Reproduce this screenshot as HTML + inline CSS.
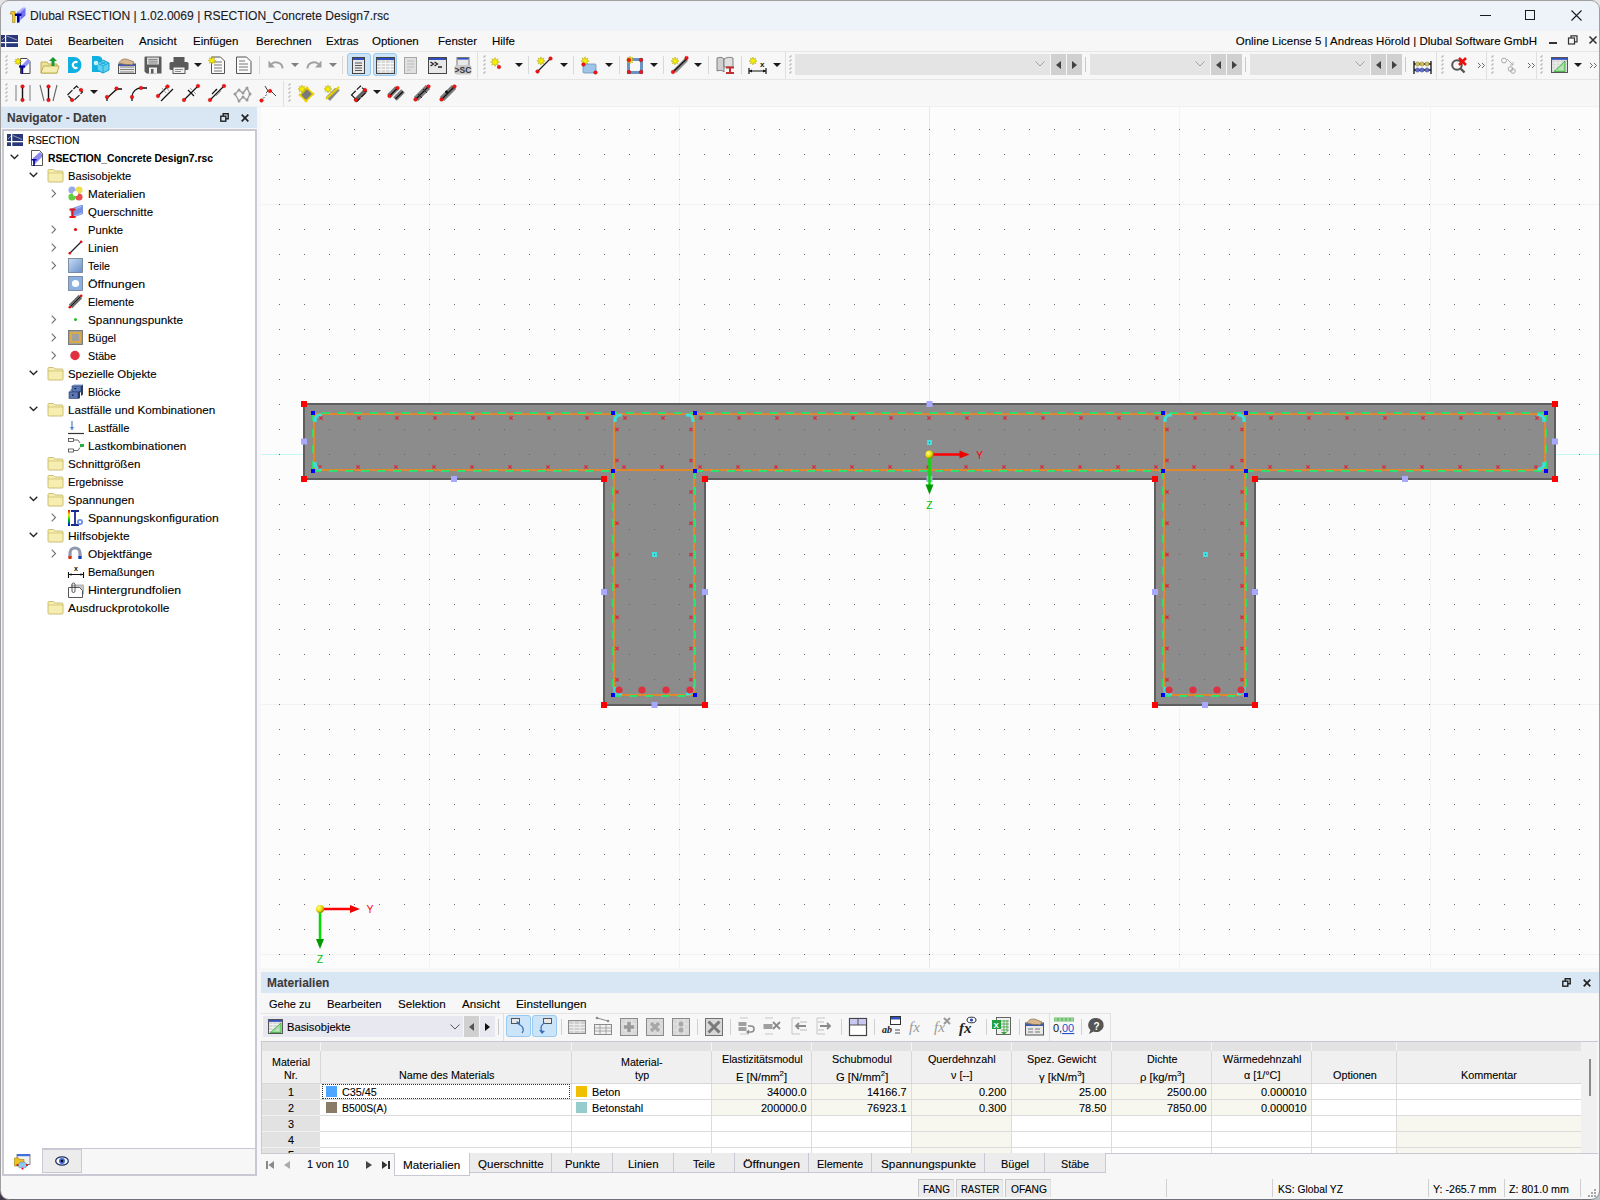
<!DOCTYPE html><html><head><meta charset="utf-8"><style>
html,body{margin:0;padding:0;width:1600px;height:1200px;overflow:hidden;background:#f7f7f7;}
body{position:relative;font-family:"Liberation Sans",sans-serif;}
.t{position:absolute;white-space:nowrap;line-height:1;-webkit-text-stroke:0.1px currentColor;}
.r{position:absolute;}
svg{position:absolute;overflow:visible;}
</style></head><body>
<div class="r" style="left:0px;top:0px;width:1600px;height:1200px;background:#f7f7f7;"></div>
<div class="r" style="left:1px;top:1px;width:1598px;height:30px;background:#eef3fa;"></div>
<div class="r" style="left:0px;top:0px;width:1600px;height:1px;background:#a0a0a0;"></div>
<div class="r" style="left:0px;top:0px;width:1px;height:1200px;background:#a0a0a0;"></div>
<div class="r" style="left:1599px;top:0px;width:1px;height:1200px;background:#a0a0a0;"></div>
<div class="r" style="left:0px;top:1199px;width:1600px;height:1px;background:#707078;"></div>
<svg style="left:8px;top:6px;" width="18" height="18" viewBox="0 0 18 18"><path d="M17.5 1.5L13 5.5v8l4.5-4z" fill="#7070f0"/><path d="M10 5.5l4.5-4h3l-4.5 4z" fill="#b0b0ff"/><path d="M9 5.5h4v8l-4 4z" fill="#9898ff"/><path d="M3 5.5h4v11H4.5v-8.5H2z" fill="#f4c830" stroke="#a08010" stroke-width="0.6"/><path d="M7 7.5h6.5v2.5h-2v6.5H9v-6.5H7z" fill="#000090"/></svg>
<div class="t" style="left:30px;top:10.06px;font-size:12.1px;color:#1a1a1a;font-weight:normal;">Dlubal RSECTION | 1.02.0069 | RSECTION_Concrete Design7.rsc</div>
<div class="r" style="left:1480px;top:15px;width:11px;height:1px;background:#1a1a1a;"></div>
<div class="r" style="left:1525px;top:10px;width:10px;height:10px;background:transparent;border:1px solid #1a1a1a;box-sizing:border-box;"></div>
<svg style="left:1571px;top:10px;" width="11" height="11" viewBox="0 0 11 11"><path d="M0.5 0.5L10.5 10.5M10.5 0.5L0.5 10.5" stroke="#1a1a1a" stroke-width="1.1"/></svg>
<div class="t" style="left:25.5px;top:36.07px;font-size:11.5px;color:#000;font-weight:normal;">Datei</div>
<div class="t" style="left:68px;top:36.07px;font-size:11.5px;color:#000;font-weight:normal;">Bearbeiten</div>
<div class="t" style="left:139px;top:36.07px;font-size:11.5px;color:#000;font-weight:normal;">Ansicht</div>
<div class="t" style="left:193px;top:36.07px;font-size:11.5px;color:#000;font-weight:normal;">Einfügen</div>
<div class="t" style="left:256px;top:36.07px;font-size:11.5px;color:#000;font-weight:normal;">Berechnen</div>
<div class="t" style="left:326px;top:36.07px;font-size:11.5px;color:#000;font-weight:normal;">Extras</div>
<div class="t" style="left:372px;top:36.07px;font-size:11.5px;color:#000;font-weight:normal;">Optionen</div>
<div class="t" style="left:438px;top:36.07px;font-size:11.5px;color:#000;font-weight:normal;">Fenster</div>
<div class="t" style="left:492px;top:36.07px;font-size:11.5px;color:#000;font-weight:normal;">Hilfe</div>
<svg style="left:1px;top:35px;" width="17" height="12" viewBox="0 0 17 12"><rect x="0" y="0" width="17" height="12" fill="#283878"/><rect x="4" y="0" width="1.2" height="12" fill="#fff"/><rect x="0" y="7" width="17" height="1.2" fill="#fff"/><path d="M6 1l10 4M1 5l3-3" stroke="#c0c8e0" stroke-width="0.7"/></svg>
<div class="t" style="left:1235.7px;top:35.57px;font-size:11.5px;color:#000;font-weight:normal;">Online License 5 | Andreas Hörold | Dlubal Software GmbH</div>
<div class="r" style="left:1549px;top:42px;width:8px;height:2px;background:#333;"></div>
<svg style="left:1568px;top:35px;" width="10" height="10" viewBox="0 0 10 10"><rect x="0.5" y="3" width="6" height="6" fill="none" stroke="#333" stroke-width="1.2"/><path d="M3 3V0.8h6v6H6.5" fill="none" stroke="#333" stroke-width="1.2"/></svg>
<svg style="left:1589px;top:36px;" width="8" height="8" viewBox="0 0 8 8"><path d="M0.5 0.5L7.5 7.5M7.5 0.5L0.5 7.5" stroke="#333" stroke-width="1.6"/></svg>
<div class="r" style="left:1px;top:51px;width:1598px;height:1px;background:#e6e6e6;"></div>
<div class="r" style="left:1px;top:79px;width:1598px;height:1px;background:#e6e6e6;"></div>
<div class="r" style="left:1px;top:106px;width:1598px;height:1px;background:#f0f0f0;"></div>
<svg style="left:4.5px;top:55.0px;" width="3" height="3" viewBox="0 0 3 3"><path d="M0.5 2.5L2.5 0.5" stroke="#b4b4b4" stroke-width="1.1"/></svg>
<svg style="left:4.5px;top:59.1px;" width="3" height="3" viewBox="0 0 3 3"><path d="M0.5 2.5L2.5 0.5" stroke="#b4b4b4" stroke-width="1.1"/></svg>
<svg style="left:4.5px;top:63.2px;" width="3" height="3" viewBox="0 0 3 3"><path d="M0.5 2.5L2.5 0.5" stroke="#b4b4b4" stroke-width="1.1"/></svg>
<svg style="left:4.5px;top:67.3px;" width="3" height="3" viewBox="0 0 3 3"><path d="M0.5 2.5L2.5 0.5" stroke="#b4b4b4" stroke-width="1.1"/></svg>
<svg style="left:4.5px;top:71.4px;" width="3" height="3" viewBox="0 0 3 3"><path d="M0.5 2.5L2.5 0.5" stroke="#b4b4b4" stroke-width="1.1"/></svg>
<svg style="left:14px;top:56px;" width="18" height="18" viewBox="0 0 18 18"><path d="M6.5 2.5h6.5l3 3v12h-9.5z" fill="#fff" stroke="#444" stroke-width="1"/><path d="M7 10L13 4h2.5v3L9 13.5H7z" fill="#9090f8"/><path d="M5 9.5h6v2H9.2v6H7.2v-6H5z" fill="#000090"/><polygon points="7.6,5.5 5.7,6.2 6.5,8.0 4.7,7.2 4.0,9.1 3.3,7.2 1.5,8.0 2.3,6.2 0.4,5.5 2.3,4.8 1.5,3.0 3.3,3.8 4.0,1.9 4.7,3.8 6.5,3.0 5.7,4.8" fill="#f6f000" stroke="#b0a000" stroke-width="0.5"/></svg>
<svg style="left:40px;top:56px;" width="19" height="18" viewBox="0 0 19 18"><path d="M1 6h6l1.5 2H17v9H1z" fill="#efe39a" stroke="#b9a74a" stroke-width="0.9"/><path d="M1 17l2.5-7H19l-2 7z" fill="#f5eeb0" stroke="#b9a74a" stroke-width="0.9"/><path d="M13 1l4 4h-2.5v5h-3V5H9z" fill="#1a9a30"/></svg>
<svg style="left:67px;top:56px;" width="15" height="18" viewBox="0 0 15 18"><path d="M1 1h6a7.5 8 0 0 1 0 16H1z" fill="#10b0e0"/><path d="M10.5 6.5a3 3 0 1 0 0 5" fill="none" stroke="#fff" stroke-width="2"/></svg>
<svg style="left:91px;top:55px;" width="20" height="19" viewBox="0 0 20 19"><path d="M1 1h6a6 8 0 0 1 4 2v14H1z" fill="#10b0e0"/><path d="M6 8l6-3 6 3v7l-6 3-6-3z" fill="#60d0f0" stroke="#10a0d0" stroke-width="1"/><path d="M6 8l6 3 6-3M12 11v7M9 6.5l6 3M15 6.5l-6 3" stroke="#10a0d0" stroke-width="0.8" fill="none"/><circle cx="5" cy="8" r="2.3" fill="#fff" opacity="0.8"/></svg>
<svg style="left:118px;top:56px;" width="18" height="18" viewBox="0 0 18 18"><rect x="0.5" y="8" width="17" height="9.5" fill="#e8e8e8" stroke="#555"/><path d="M2 11h14M2 13.5h14M2 16h14" stroke="#777" stroke-width="0.9"/><rect x="0.5" y="8" width="17" height="2" fill="#3c5cb0"/><path d="M1 7c2-4 6-5 10-3l5 2-2 3c-3-1-6 0-9-1z" fill="#d8b890" stroke="#8a6a40" stroke-width="0.7"/></svg>
<svg style="left:144px;top:56px;" width="18" height="18" viewBox="0 0 18 18"><path d="M0.5 1.5a1 1 0 0 1 1-1h15a1 1 0 0 1 1 1v16H2.5l-2-2z" fill="#5a5a5a"/><rect x="3" y="1.5" width="12" height="7" fill="#d8d8d8"/><path d="M4.5 3.5h9M4.5 5.2h9M4.5 7h9" stroke="#777" stroke-width="0.8"/><rect x="5" y="11.5" width="8" height="6" fill="#f0f0f0"/><rect x="7" y="13" width="2.5" height="4.5" fill="#5a5a5a"/></svg>
<svg style="left:169px;top:56px;" width="20" height="18" viewBox="0 0 20 18"><rect x="4.5" y="1" width="11" height="5" fill="#5a5a5a"/><rect x="0.5" y="6" width="19" height="8" rx="1.5" fill="#5a5a5a"/><rect x="4" y="11" width="12" height="6.5" fill="#f0f0f0" stroke="#5a5a5a" stroke-width="1"/><path d="M6 13.5h8M6 15.5h6" stroke="#777" stroke-width="0.8"/></svg>
<svg style="left:194px;top:63px;" width="8" height="4" viewBox="0 0 8 4"><path d="M0 0h8l-4 4z" fill="#1a1a1a"/></svg>
<svg style="left:208px;top:56px;" width="18" height="18" viewBox="0 0 18 18"><path d="M3.5 1h9l4 4v12.5h-13z" fill="#fafafa" stroke="#555" stroke-width="1"/><path d="M6 6h8M6 9h8M6 12h8M6 15h8" stroke="#666" stroke-width="0.9"/><polygon points="7.8,4.5 5.8,5.2 6.7,7.2 4.7,6.3 4.0,8.3 3.3,6.3 1.3,7.2 2.2,5.2 0.2,4.5 2.2,3.8 1.3,1.8 3.3,2.7 4.0,0.7 4.7,2.7 6.7,1.8 5.8,3.8" fill="#f6f000" stroke="#b0a000" stroke-width="0.5"/></svg>
<svg style="left:236px;top:56px;" width="16" height="18" viewBox="0 0 16 18"><path d="M0.5 1h10l4.5 4.5v12h-14.5z" fill="#fafafa" stroke="#555" stroke-width="1"/><path d="M3 5h6M3 8h9M3 11h9M3 14h9" stroke="#666" stroke-width="0.9"/></svg>
<div class="r" style="left:259px;top:56px;width:1px;height:18px;background:#d8d8d8;"></div>
<svg style="left:268px;top:59px;" width="16" height="10" viewBox="0 0 16 10"><path d="M14.5 9.5a6.5 6 0 0 0-11-4.5" fill="none" stroke="#a0a0a0" stroke-width="2"/><path d="M0.5 1.5v7h6.5z" fill="#a0a0a0"/></svg>
<svg style="left:291px;top:63px;" width="8" height="4" viewBox="0 0 8 4"><path d="M0 0h8l-4 4z" fill="#808080"/></svg>
<svg style="left:306px;top:59px;" width="16" height="10" viewBox="0 0 16 10"><path d="M1.5 9.5a6.5 6 0 0 1 11-4.5" fill="none" stroke="#a0a0a0" stroke-width="2"/><path d="M15.5 1.5v7h-6.5z" fill="#a0a0a0"/></svg>
<svg style="left:329px;top:63px;" width="8" height="4" viewBox="0 0 8 4"><path d="M0 0h8l-4 4z" fill="#808080"/></svg>
<div class="r" style="left:342px;top:56px;width:1px;height:18px;background:#d8d8d8;"></div>
<div class="r" style="left:347px;top:53px;width:24px;height:23px;background:#cce4f7;border:1px solid #99c9ef;box-sizing:border-box;border-radius:3px;"></div>
<div class="r" style="left:373px;top:53px;width:24px;height:23px;background:#cce4f7;border:1px solid #99c9ef;box-sizing:border-box;border-radius:3px;"></div>
<svg style="left:352px;top:57px;" width="13" height="17" viewBox="0 0 13 17"><rect x="0.5" y="0.5" width="12" height="16" fill="#e8e8e8" stroke="#444"/><rect x="1" y="1" width="11" height="2" fill="#3050c0"/><path d="M3 6h7M3 8.5h7M3 11h7M3 13.5h7" stroke="#555" stroke-width="1"/></svg>
<svg style="left:376px;top:57px;" width="19" height="17" viewBox="0 0 19 17"><rect x="0.5" y="0.5" width="18" height="16" fill="#d8d8d8" stroke="#444"/><rect x="1" y="1" width="17" height="2" fill="#3050c0"/><path d="M1 6.5h17M1 9.5h17M1 12.5h17M5 3v13M9.5 3v13M14 3v13" stroke="#fff" stroke-width="0.8"/></svg>
<svg style="left:404px;top:57px;" width="14" height="17" viewBox="0 0 14 17"><rect x="0.5" y="0.5" width="12" height="16" fill="#e0e0e0" stroke="#a8a8a8"/><path d="M3 4h7M3 7h7M3 10h7M3 13h4" stroke="#bbb" stroke-width="1.2"/></svg>
<svg style="left:428px;top:57px;" width="19" height="17" viewBox="0 0 19 17"><rect x="0.5" y="0.5" width="18" height="16" fill="#e8e8e8" stroke="#444"/><rect x="1" y="1" width="17" height="2" fill="#3050c0"/><path d="M2.5 5l3 2-3 2M6.5 5l3 2-3 2M10 10h4" stroke="#222" stroke-width="1.3" fill="none"/></svg>
<svg style="left:454px;top:57px;" width="18" height="18" viewBox="0 0 18 18"><rect x="3" y="0.5" width="12" height="9" fill="#e8e8e8" stroke="#777"/><rect x="3.5" y="1" width="11" height="1.6" fill="#3050c0"/><rect x="0.5" y="8" width="17" height="9.5" rx="2.5" fill="#c8c8c8"/><text x="9" y="16" font-size="8.5" font-weight="bold" text-anchor="middle" fill="#333" font-family="Liberation Sans">&gt;SC</text></svg>
<div class="r" style="left:477px;top:52px;width:1px;height:27px;background:#e0e0e0;"></div>
<svg style="left:482.5px;top:55.0px;" width="3" height="3" viewBox="0 0 3 3"><path d="M0.5 2.5L2.5 0.5" stroke="#b4b4b4" stroke-width="1.1"/></svg>
<svg style="left:482.5px;top:59.1px;" width="3" height="3" viewBox="0 0 3 3"><path d="M0.5 2.5L2.5 0.5" stroke="#b4b4b4" stroke-width="1.1"/></svg>
<svg style="left:482.5px;top:63.2px;" width="3" height="3" viewBox="0 0 3 3"><path d="M0.5 2.5L2.5 0.5" stroke="#b4b4b4" stroke-width="1.1"/></svg>
<svg style="left:482.5px;top:67.3px;" width="3" height="3" viewBox="0 0 3 3"><path d="M0.5 2.5L2.5 0.5" stroke="#b4b4b4" stroke-width="1.1"/></svg>
<svg style="left:482.5px;top:71.4px;" width="3" height="3" viewBox="0 0 3 3"><path d="M0.5 2.5L2.5 0.5" stroke="#b4b4b4" stroke-width="1.1"/></svg>
<svg style="left:489px;top:56px;" width="15" height="15" viewBox="0 0 15 15"><polygon points="10.5,6.0 8.1,6.9 9.2,9.2 6.9,8.1 6.0,10.5 5.1,8.1 2.8,9.2 3.9,6.9 1.5,6.0 3.9,5.1 2.8,2.8 5.1,3.9 6.0,1.5 6.9,3.9 9.2,2.8 8.1,5.1" fill="#f6f000" stroke="#b0a000" stroke-width="0.5"/><circle cx="10" cy="11" r="1.8" fill="#ff1010" stroke="#a00000" stroke-width="0.4"/></svg>
<svg style="left:515px;top:63px;" width="8" height="4" viewBox="0 0 8 4"><path d="M0 0h8l-4 4z" fill="#1a1a1a"/></svg>
<div class="r" style="left:528px;top:56px;width:1px;height:18px;background:#d8d8d8;"></div>
<svg style="left:535px;top:56px;" width="18" height="18" viewBox="0 0 18 18"><polygon points="10.2,5.0 7.9,5.8 9.0,8.0 6.8,6.9 6.0,9.2 5.2,6.9 3.0,8.0 4.1,5.8 1.8,5.0 4.1,4.2 3.0,2.0 5.2,3.1 6.0,0.8 6.8,3.1 9.0,2.0 7.9,4.2" fill="#f6f000" stroke="#b0a000" stroke-width="0.5"/><path d="M2 16L16 2" stroke="#222" stroke-width="1.2"/><circle cx="2.5" cy="15.5" r="1.8" fill="#ff1010" stroke="#a00000" stroke-width="0.4"/><circle cx="15.5" cy="2.5" r="1.8" fill="#ff1010" stroke="#a00000" stroke-width="0.4"/></svg>
<svg style="left:560px;top:63px;" width="8" height="4" viewBox="0 0 8 4"><path d="M0 0h8l-4 4z" fill="#1a1a1a"/></svg>
<div class="r" style="left:573px;top:56px;width:1px;height:18px;background:#d8d8d8;"></div>
<svg style="left:580px;top:56px;" width="18" height="18" viewBox="0 0 18 18"><rect x="3" y="8" width="13" height="9" rx="1" fill="#9ec4e8" stroke="#6a94c0" stroke-width="0.8"/><polygon points="9.2,5.0 6.9,5.8 8.0,8.0 5.8,6.9 5.0,9.2 4.2,6.9 2.0,8.0 3.1,5.8 0.8,5.0 3.1,4.2 2.0,2.0 4.2,3.1 5.0,0.8 5.8,3.1 8.0,2.0 6.9,4.2" fill="#f6f000" stroke="#b0a000" stroke-width="0.5"/><circle cx="3.5" cy="8.5" r="1.8" fill="#ff1010" stroke="#a00000" stroke-width="0.4"/><circle cx="15.5" cy="16.5" r="1.8" fill="#ff1010" stroke="#a00000" stroke-width="0.4"/></svg>
<svg style="left:605px;top:63px;" width="8" height="4" viewBox="0 0 8 4"><path d="M0 0h8l-4 4z" fill="#1a1a1a"/></svg>
<div class="r" style="left:619px;top:56px;width:1px;height:18px;background:#d8d8d8;"></div>
<svg style="left:626px;top:56px;" width="18" height="18" viewBox="0 0 18 18"><rect x="2.5" y="3.5" width="13" height="13" fill="none" stroke="#6a94c0" stroke-width="3"/><polygon points="7.8,4.0 5.8,4.7 6.7,6.7 4.7,5.8 4.0,7.8 3.3,5.8 1.3,6.7 2.2,4.7 0.2,4.0 2.2,3.3 1.3,1.3 3.3,2.2 4.0,0.2 4.7,2.2 6.7,1.3 5.8,3.3" fill="#f6f000" stroke="#b0a000" stroke-width="0.5"/><circle cx="3" cy="4" r="1.8" fill="#ff1010" stroke="#a00000" stroke-width="0.4"/><circle cx="15" cy="4" r="1.8" fill="#ff1010" stroke="#a00000" stroke-width="0.4"/><circle cx="3" cy="16" r="1.8" fill="#ff1010" stroke="#a00000" stroke-width="0.4"/><circle cx="15" cy="16" r="1.8" fill="#ff1010" stroke="#a00000" stroke-width="0.4"/></svg>
<svg style="left:650px;top:63px;" width="8" height="4" viewBox="0 0 8 4"><path d="M0 0h8l-4 4z" fill="#1a1a1a"/></svg>
<div class="r" style="left:663px;top:56px;width:1px;height:18px;background:#d8d8d8;"></div>
<svg style="left:670px;top:56px;" width="19" height="18" viewBox="0 0 19 18"><path d="M3 14L15 2l3 3L6 17z" fill="#8a8a8a"/><path d="M3 16L17 2.5" stroke="#111" stroke-width="1.2"/><polygon points="9.0,5.0 6.8,5.8 7.8,7.8 5.8,6.8 5.0,9.0 4.2,6.8 2.2,7.8 3.2,5.8 1.0,5.0 3.2,4.2 2.2,2.2 4.2,3.2 5.0,1.0 5.8,3.2 7.8,2.2 6.8,4.2" fill="#f6f000" stroke="#b0a000" stroke-width="0.5"/><circle cx="3" cy="16" r="1.8" fill="#ff1010" stroke="#a00000" stroke-width="0.4"/><circle cx="16.5" cy="2" r="1.8" fill="#ff1010" stroke="#a00000" stroke-width="0.4"/></svg>
<svg style="left:694px;top:63px;" width="8" height="4" viewBox="0 0 8 4"><path d="M0 0h8l-4 4z" fill="#1a1a1a"/></svg>
<div class="r" style="left:708px;top:56px;width:1px;height:18px;background:#d8d8d8;"></div>
<svg style="left:716px;top:56px;" width="19" height="18" viewBox="0 0 19 18"><path d="M1 2c3-1 5-1 7 1v13c-2-2-4-2-7-1z" fill="#d0d0d0" stroke="#666" stroke-width="0.8"/><path d="M8 3c3-2 6-2 9-1v9H8z" fill="#e0e0e0" stroke="#666" stroke-width="0.8"/><path d="M10 11.5h8M10 17h8M14 11.5v5.5" stroke="#c03030" stroke-width="2"/></svg>
<div class="r" style="left:741px;top:56px;width:1px;height:18px;background:#d8d8d8;"></div>
<svg style="left:748px;top:56px;" width="19" height="18" viewBox="0 0 19 18"><polygon points="9.0,5.0 6.8,5.8 7.8,7.8 5.8,6.8 5.0,9.0 4.2,6.8 2.2,7.8 3.2,5.8 1.0,5.0 3.2,4.2 2.2,2.2 4.2,3.2 5.0,1.0 5.8,3.2 7.8,2.2 6.8,4.2" fill="#f6f000" stroke="#b0a000" stroke-width="0.5"/><path d="M1 12v6M18 12v6M1 15h17" stroke="#111" stroke-width="1.2"/><path d="M1 15l3-1.5v3zM18 15l-3-1.5v3z" fill="#111"/><text x="12" y="11" font-size="8" font-weight="bold" fill="#111" font-family="Liberation Sans">x</text></svg>
<svg style="left:773px;top:63px;" width="8" height="4" viewBox="0 0 8 4"><path d="M0 0h8l-4 4z" fill="#1a1a1a"/></svg>
<div class="r" style="left:785px;top:52px;width:1px;height:27px;background:#e0e0e0;"></div>
<svg style="left:789px;top:55.0px;" width="3" height="3" viewBox="0 0 3 3"><path d="M0.5 2.5L2.5 0.5" stroke="#b4b4b4" stroke-width="1.1"/></svg>
<svg style="left:789px;top:59.1px;" width="3" height="3" viewBox="0 0 3 3"><path d="M0.5 2.5L2.5 0.5" stroke="#b4b4b4" stroke-width="1.1"/></svg>
<svg style="left:789px;top:63.2px;" width="3" height="3" viewBox="0 0 3 3"><path d="M0.5 2.5L2.5 0.5" stroke="#b4b4b4" stroke-width="1.1"/></svg>
<svg style="left:789px;top:67.3px;" width="3" height="3" viewBox="0 0 3 3"><path d="M0.5 2.5L2.5 0.5" stroke="#b4b4b4" stroke-width="1.1"/></svg>
<svg style="left:789px;top:71.4px;" width="3" height="3" viewBox="0 0 3 3"><path d="M0.5 2.5L2.5 0.5" stroke="#b4b4b4" stroke-width="1.1"/></svg>
<div class="r" style="left:795px;top:54px;width:255px;height:21px;background:#e4e4e4;"></div>
<svg style="left:1035px;top:61px;" width="10" height="6" viewBox="0 0 10 6"><path d="M0.5 0.5l4.5 4.5 4.5-4.5" fill="none" stroke="#a0a0a0" stroke-width="1"/></svg>
<div class="r" style="left:1051px;top:54px;width:15px;height:21px;background:#d0d0d0;"></div>
<div class="r" style="left:1067px;top:54px;width:15px;height:21px;background:#d0d0d0;"></div>
<svg style="left:1056px;top:61px;" width="5" height="8" viewBox="0 0 5 8"><path d="M5 0v8L0 4z" fill="#404040"/></svg>
<svg style="left:1072px;top:61px;" width="5" height="8" viewBox="0 0 5 8"><path d="M0 0v8l5-4z" fill="#404040"/></svg>
<div class="r" style="left:1085px;top:57px;width:1px;height:15px;background:#c8c8c8;"></div>
<div class="r" style="left:1090px;top:54px;width:120px;height:21px;background:#e4e4e4;"></div>
<svg style="left:1195px;top:61px;" width="10" height="6" viewBox="0 0 10 6"><path d="M0.5 0.5l4.5 4.5 4.5-4.5" fill="none" stroke="#a0a0a0" stroke-width="1"/></svg>
<div class="r" style="left:1211px;top:54px;width:15px;height:21px;background:#d0d0d0;"></div>
<div class="r" style="left:1227px;top:54px;width:15px;height:21px;background:#d0d0d0;"></div>
<svg style="left:1216px;top:61px;" width="5" height="8" viewBox="0 0 5 8"><path d="M5 0v8L0 4z" fill="#404040"/></svg>
<svg style="left:1232px;top:61px;" width="5" height="8" viewBox="0 0 5 8"><path d="M0 0v8l5-4z" fill="#404040"/></svg>
<div class="r" style="left:1245px;top:57px;width:1px;height:15px;background:#c8c8c8;"></div>
<div class="r" style="left:1250px;top:54px;width:120px;height:21px;background:#e4e4e4;"></div>
<svg style="left:1355px;top:61px;" width="10" height="6" viewBox="0 0 10 6"><path d="M0.5 0.5l4.5 4.5 4.5-4.5" fill="none" stroke="#a0a0a0" stroke-width="1"/></svg>
<div class="r" style="left:1371px;top:54px;width:15px;height:21px;background:#d0d0d0;"></div>
<div class="r" style="left:1387px;top:54px;width:15px;height:21px;background:#d0d0d0;"></div>
<svg style="left:1376px;top:61px;" width="5" height="8" viewBox="0 0 5 8"><path d="M5 0v8L0 4z" fill="#404040"/></svg>
<svg style="left:1392px;top:61px;" width="5" height="8" viewBox="0 0 5 8"><path d="M0 0v8l5-4z" fill="#404040"/></svg>
<div class="r" style="left:1405px;top:57px;width:1px;height:15px;background:#c8c8c8;"></div>
<svg style="left:1413px;top:60px;" width="19" height="15" viewBox="0 0 19 15"><path d="M1 1v13M18 1v13M1 4h17M1 10h17" stroke="#111" stroke-width="1.3"/><circle cx="4.5" cy="4" r="2.1" fill="#d0c060" stroke="#807020" stroke-width="0.5"/><circle cx="9" cy="4" r="2.1" fill="#d0c060" stroke="#807020" stroke-width="0.5"/><circle cx="14" cy="4" r="2.1" fill="#d0c060" stroke="#807020" stroke-width="0.5"/><circle cx="4.5" cy="10" r="2.1" fill="#6070d0" stroke="#303880" stroke-width="0.5"/><circle cx="9" cy="10" r="2.1" fill="#6070d0" stroke="#303880" stroke-width="0.5"/><circle cx="14" cy="10" r="2.1" fill="#6070d0" stroke="#303880" stroke-width="0.5"/></svg>
<div class="r" style="left:1436px;top:52px;width:1px;height:27px;background:#e0e0e0;"></div>
<svg style="left:1441px;top:55.0px;" width="3" height="3" viewBox="0 0 3 3"><path d="M0.5 2.5L2.5 0.5" stroke="#b4b4b4" stroke-width="1.1"/></svg>
<svg style="left:1441px;top:59.1px;" width="3" height="3" viewBox="0 0 3 3"><path d="M0.5 2.5L2.5 0.5" stroke="#b4b4b4" stroke-width="1.1"/></svg>
<svg style="left:1441px;top:63.2px;" width="3" height="3" viewBox="0 0 3 3"><path d="M0.5 2.5L2.5 0.5" stroke="#b4b4b4" stroke-width="1.1"/></svg>
<svg style="left:1441px;top:67.3px;" width="3" height="3" viewBox="0 0 3 3"><path d="M0.5 2.5L2.5 0.5" stroke="#b4b4b4" stroke-width="1.1"/></svg>
<svg style="left:1441px;top:71.4px;" width="3" height="3" viewBox="0 0 3 3"><path d="M0.5 2.5L2.5 0.5" stroke="#b4b4b4" stroke-width="1.1"/></svg>
<svg style="left:1450px;top:56px;" width="19" height="18" viewBox="0 0 19 18"><circle cx="7" cy="9" r="4.8" fill="none" stroke="#555" stroke-width="2"/><path d="M10.5 12.5l4 4" stroke="#555" stroke-width="2.4"/><path d="M9 2l7 7M16 2l-7 7" stroke="#ee1010" stroke-width="2.6"/></svg>
<svg style="left:1477px;top:62px;" width="8" height="7" viewBox="0 0 8 7"><path d="M1 1l2.5 2.5L1 6M5 1l2.5 2.5L5 6" fill="none" stroke="#555" stroke-width="0.9"/></svg>
<div class="r" style="left:1486px;top:52px;width:1px;height:27px;background:#e0e0e0;"></div>
<svg style="left:1491px;top:55.0px;" width="3" height="3" viewBox="0 0 3 3"><path d="M0.5 2.5L2.5 0.5" stroke="#b4b4b4" stroke-width="1.1"/></svg>
<svg style="left:1491px;top:59.1px;" width="3" height="3" viewBox="0 0 3 3"><path d="M0.5 2.5L2.5 0.5" stroke="#b4b4b4" stroke-width="1.1"/></svg>
<svg style="left:1491px;top:63.2px;" width="3" height="3" viewBox="0 0 3 3"><path d="M0.5 2.5L2.5 0.5" stroke="#b4b4b4" stroke-width="1.1"/></svg>
<svg style="left:1491px;top:67.3px;" width="3" height="3" viewBox="0 0 3 3"><path d="M0.5 2.5L2.5 0.5" stroke="#b4b4b4" stroke-width="1.1"/></svg>
<svg style="left:1491px;top:71.4px;" width="3" height="3" viewBox="0 0 3 3"><path d="M0.5 2.5L2.5 0.5" stroke="#b4b4b4" stroke-width="1.1"/></svg>
<svg style="left:1501px;top:57px;" width="16" height="16" viewBox="0 0 16 16"><circle cx="3" cy="3.5" r="2.5" fill="none" stroke="#aaa" stroke-width="1"/><path d="M6 2l6 6M12 8v-3M12 8h-3" fill="none" stroke="#aaa" stroke-width="0.9"/><circle cx="9.5" cy="12" r="2.3" fill="none" stroke="#aaa" stroke-width="1"/><circle cx="12" cy="14" r="2.3" fill="none" stroke="#aaa" stroke-width="1"/></svg>
<svg style="left:1527px;top:62px;" width="8" height="7" viewBox="0 0 8 7"><path d="M1 1l2.5 2.5L1 6M5 1l2.5 2.5L5 6" fill="none" stroke="#555" stroke-width="0.9"/></svg>
<div class="r" style="left:1536px;top:52px;width:1px;height:27px;background:#e0e0e0;"></div>
<svg style="left:1540px;top:55.0px;" width="3" height="3" viewBox="0 0 3 3"><path d="M0.5 2.5L2.5 0.5" stroke="#b4b4b4" stroke-width="1.1"/></svg>
<svg style="left:1540px;top:59.1px;" width="3" height="3" viewBox="0 0 3 3"><path d="M0.5 2.5L2.5 0.5" stroke="#b4b4b4" stroke-width="1.1"/></svg>
<svg style="left:1540px;top:63.2px;" width="3" height="3" viewBox="0 0 3 3"><path d="M0.5 2.5L2.5 0.5" stroke="#b4b4b4" stroke-width="1.1"/></svg>
<svg style="left:1540px;top:67.3px;" width="3" height="3" viewBox="0 0 3 3"><path d="M0.5 2.5L2.5 0.5" stroke="#b4b4b4" stroke-width="1.1"/></svg>
<svg style="left:1540px;top:71.4px;" width="3" height="3" viewBox="0 0 3 3"><path d="M0.5 2.5L2.5 0.5" stroke="#b4b4b4" stroke-width="1.1"/></svg>
<svg style="left:1551px;top:57px;" width="17" height="16" viewBox="0 0 17 16"><rect x="0.5" y="0.5" width="16" height="15" fill="#d8d8d8" stroke="#555"/><rect x="1" y="1" width="15" height="1.8" fill="#3050c0"/><path d="M1 6h15M1 9h15M1 12h15M5 3v12M9 3v12" stroke="#fff" stroke-width="0.6"/><path d="M3 14.5L14 4v10.5z" fill="#90e890" stroke="#40a040" stroke-width="0.8"/><path d="M8 12.5L12 9v3.5z" fill="#d8d8d8"/></svg>
<svg style="left:1574px;top:63px;" width="8" height="4" viewBox="0 0 8 4"><path d="M0 0h8l-4 4z" fill="#1a1a1a"/></svg>
<svg style="left:1589px;top:62px;" width="8" height="7" viewBox="0 0 8 7"><path d="M1 1l2.5 2.5L1 6M5 1l2.5 2.5L5 6" fill="none" stroke="#555" stroke-width="0.9"/></svg>
<svg style="left:4.5px;top:83.0px;" width="3" height="3" viewBox="0 0 3 3"><path d="M0.5 2.5L2.5 0.5" stroke="#b4b4b4" stroke-width="1.1"/></svg>
<svg style="left:4.5px;top:87.1px;" width="3" height="3" viewBox="0 0 3 3"><path d="M0.5 2.5L2.5 0.5" stroke="#b4b4b4" stroke-width="1.1"/></svg>
<svg style="left:4.5px;top:91.2px;" width="3" height="3" viewBox="0 0 3 3"><path d="M0.5 2.5L2.5 0.5" stroke="#b4b4b4" stroke-width="1.1"/></svg>
<svg style="left:4.5px;top:95.3px;" width="3" height="3" viewBox="0 0 3 3"><path d="M0.5 2.5L2.5 0.5" stroke="#b4b4b4" stroke-width="1.1"/></svg>
<svg style="left:4.5px;top:99.4px;" width="3" height="3" viewBox="0 0 3 3"><path d="M0.5 2.5L2.5 0.5" stroke="#b4b4b4" stroke-width="1.1"/></svg>
<svg style="left:14px;top:84px;" width="18" height="18" viewBox="0 0 18 18"><path d="M2 1v16M16 1v16" stroke="#888" stroke-width="1.1"/><path d="M8.5 2v14" stroke="#111" stroke-width="1.4"/><circle cx="8.5" cy="2.5" r="1.8" fill="#ff1010" stroke="#a00000" stroke-width="0.4"/><circle cx="8.5" cy="16" r="1.8" fill="#ff1010" stroke="#a00000" stroke-width="0.4"/></svg>
<svg style="left:39px;top:84px;" width="19" height="18" viewBox="0 0 19 18"><path d="M1 1l4 16M18 1l-4 16" stroke="#666" stroke-width="1.1"/><path d="M9.5 2v14" stroke="#111" stroke-width="1.4"/><circle cx="9.5" cy="2.5" r="1.8" fill="#ff1010" stroke="#a00000" stroke-width="0.4"/><circle cx="9.5" cy="16" r="1.8" fill="#ff1010" stroke="#a00000" stroke-width="0.4"/></svg>
<svg style="left:66px;top:84px;" width="18" height="18" viewBox="0 0 18 18"><path d="M1.5 11l9-9 6 6-9 9z" fill="none" stroke="#111" stroke-width="1.1" stroke-dasharray="7 1.5"/><circle cx="15" cy="6" r="1.8" fill="#ff1010" stroke="#a00000" stroke-width="0.4"/><circle cx="6" cy="16" r="1.8" fill="#ff1010" stroke="#a00000" stroke-width="0.4"/></svg>
<svg style="left:90px;top:90px;" width="8" height="4" viewBox="0 0 8 4"><path d="M0 0h8l-4 4z" fill="#1a1a1a"/></svg>
<svg style="left:105px;top:84px;" width="18" height="18" viewBox="0 0 18 18"><path d="M2 17v-3l10-9h5" fill="none" stroke="#111" stroke-width="1.3"/><circle cx="2" cy="13" r="1.8" fill="#ff1010" stroke="#a00000" stroke-width="0.4"/><circle cx="11.5" cy="4.5" r="1.8" fill="#ff1010" stroke="#a00000" stroke-width="0.4"/></svg>
<svg style="left:130px;top:84px;" width="18" height="18" viewBox="0 0 18 18"><path d="M2 17v-4a9 9 0 0 1 9-9h6" fill="none" stroke="#111" stroke-width="1.3"/><circle cx="2" cy="13" r="1.8" fill="#ff1010" stroke="#a00000" stroke-width="0.4"/><circle cx="11" cy="4" r="1.8" fill="#ff1010" stroke="#a00000" stroke-width="0.4"/></svg>
<svg style="left:156px;top:84px;" width="18" height="18" viewBox="0 0 18 18"><path d="M2 12L12 2M5 17L17 5" stroke="#111" stroke-width="1.2"/><path d="M6 4l4 5M9 2l4 5" stroke="#888" stroke-width="0.8"/><circle cx="2" cy="12" r="1.8" fill="#ff1010" stroke="#a00000" stroke-width="0.4"/><circle cx="11.5" cy="2.5" r="1.8" fill="#ff1010" stroke="#a00000" stroke-width="0.4"/></svg>
<svg style="left:182px;top:84px;" width="18" height="18" viewBox="0 0 18 18"><path d="M2 16L16 2M6 6l6 6" stroke="#111" stroke-width="1.2"/><path d="M8 4l6 6" stroke="#888" stroke-width="0.8"/><circle cx="2" cy="16" r="1.8" fill="#ff1010" stroke="#a00000" stroke-width="0.4"/><circle cx="16" cy="2" r="1.8" fill="#ff1010" stroke="#a00000" stroke-width="0.4"/></svg>
<svg style="left:208px;top:84px;" width="18" height="18" viewBox="0 0 18 18"><path d="M2 16L16 2M4 10l5-5" stroke="#111" stroke-width="1.2"/><path d="M7 6l2-1-1 2" fill="#111"/><path d="M8 12l5-5" stroke="#888" stroke-width="0.8"/><circle cx="2" cy="16" r="1.8" fill="#ff1010" stroke="#a00000" stroke-width="0.4"/><circle cx="16" cy="2" r="1.8" fill="#ff1010" stroke="#a00000" stroke-width="0.4"/></svg>
<svg style="left:233px;top:84px;" width="18" height="18" viewBox="0 0 18 18"><path d="M2 10l4-4 4 3 4-5 3 6-3 6-4-3-4 4z" fill="none" stroke="#999" stroke-width="1.3"/><circle cx="2" cy="10" r="1.5" fill="#999"/><circle cx="6" cy="6" r="1.5" fill="#999"/><circle cx="10" cy="9" r="1.5" fill="#999"/><circle cx="14" cy="4" r="1.5" fill="#999"/><circle cx="17" cy="10" r="1.5" fill="#999"/><circle cx="14" cy="16" r="1.5" fill="#999"/><circle cx="10" cy="13" r="1.5" fill="#999"/><circle cx="6" cy="17" r="1.5" fill="#999"/></svg>
<svg style="left:259px;top:84px;" width="18" height="18" viewBox="0 0 18 18"><path d="M2 17L9 9" stroke="#111" stroke-width="1" stroke-dasharray="1.5 2"/><path d="M6 2l3 5-2 2M11 6l6 6" stroke="#111" stroke-width="0.8" fill="none"/><circle cx="2.5" cy="16.5" r="1.8" fill="#ff1010" stroke="#a00000" stroke-width="0.4"/><circle cx="11" cy="7" r="1.8" fill="#ff1010" stroke="#a00000" stroke-width="0.4"/></svg>
<div class="r" style="left:283px;top:81px;width:1px;height:25px;background:#e0e0e0;"></div>
<svg style="left:287.5px;top:83.0px;" width="3" height="3" viewBox="0 0 3 3"><path d="M0.5 2.5L2.5 0.5" stroke="#b4b4b4" stroke-width="1.1"/></svg>
<svg style="left:287.5px;top:87.1px;" width="3" height="3" viewBox="0 0 3 3"><path d="M0.5 2.5L2.5 0.5" stroke="#b4b4b4" stroke-width="1.1"/></svg>
<svg style="left:287.5px;top:91.2px;" width="3" height="3" viewBox="0 0 3 3"><path d="M0.5 2.5L2.5 0.5" stroke="#b4b4b4" stroke-width="1.1"/></svg>
<svg style="left:287.5px;top:95.3px;" width="3" height="3" viewBox="0 0 3 3"><path d="M0.5 2.5L2.5 0.5" stroke="#b4b4b4" stroke-width="1.1"/></svg>
<svg style="left:287.5px;top:99.4px;" width="3" height="3" viewBox="0 0 3 3"><path d="M0.5 2.5L2.5 0.5" stroke="#b4b4b4" stroke-width="1.1"/></svg>
<svg style="left:297px;top:84px;" width="18" height="18" viewBox="0 0 18 18"><path d="M3 11l7-7 6 6-7 7z" fill="#7a7a7a" stroke="#e8d000" stroke-width="1.6"/><polygon points="9.0,5.0 6.8,5.8 7.8,7.8 5.8,6.8 5.0,9.0 4.2,6.8 2.2,7.8 3.2,5.8 1.0,5.0 3.2,4.2 2.2,2.2 4.2,3.2 5.0,1.0 5.8,3.2 7.8,2.2 6.8,4.2" fill="#f6f000" stroke="#b0a000" stroke-width="0.5"/><circle cx="3" cy="11" r="1.4" fill="#f0d000"/><circle cx="10" cy="4" r="1.4" fill="#f0d000"/><circle cx="16" cy="10" r="1.4" fill="#f0d000"/><circle cx="9" cy="17" r="1.4" fill="#f0d000"/></svg>
<svg style="left:323px;top:84px;" width="18" height="18" viewBox="0 0 18 18"><path d="M3 13l9-9 5 2-10 11z" fill="#888"/><path d="M3 15L16 3" stroke="#e8d000" stroke-width="2.2"/><polygon points="9.0,5.0 6.8,5.8 7.8,7.8 5.8,6.8 5.0,9.0 4.2,6.8 2.2,7.8 3.2,5.8 1.0,5.0 3.2,4.2 2.2,2.2 4.2,3.2 5.0,1.0 5.8,3.2 7.8,2.2 6.8,4.2" fill="#f6f000" stroke="#b0a000" stroke-width="0.5"/></svg>
<svg style="left:350px;top:84px;" width="18" height="18" viewBox="0 0 18 18"><path d="M5 17l11-11" stroke="#666" stroke-width="4"/><path d="M1.5 11l9-9 6 6-9 9z" fill="none" stroke="#111" stroke-width="1.1" stroke-dasharray="6 1.5"/><circle cx="15" cy="6" r="1.8" fill="#ff1010" stroke="#a00000" stroke-width="0.4"/><circle cx="6" cy="16" r="1.8" fill="#ff1010" stroke="#a00000" stroke-width="0.4"/></svg>
<svg style="left:373px;top:90px;" width="8" height="4" viewBox="0 0 8 4"><path d="M0 0h8l-4 4z" fill="#1a1a1a"/></svg>
<svg style="left:387px;top:84px;" width="18" height="18" viewBox="0 0 18 18"><path d="M2 12L10 4" stroke="#7a7a7a" stroke-width="5"/><path d="M8 15L16 7" stroke="#7a7a7a" stroke-width="5"/><path d="M2.5 12L10 4.5M8.5 15L16 7.5" stroke="#111" stroke-width="1.1"/><circle cx="2.5" cy="12" r="1.8" fill="#ff1010" stroke="#a00000" stroke-width="0.4"/><circle cx="10.5" cy="4" r="1.8" fill="#ff1010" stroke="#a00000" stroke-width="0.4"/></svg>
<svg style="left:413px;top:84px;" width="18" height="18" viewBox="0 0 18 18"><path d="M3 15L15 3" stroke="#7a7a7a" stroke-width="6"/><path d="M2.5 15.5L15.5 2.5" stroke="#111" stroke-width="1.2"/><path d="M5 10l4 4M10 5l4 4" stroke="#222" stroke-width="0.9"/><circle cx="2.5" cy="15.5" r="1.8" fill="#ff1010" stroke="#a00000" stroke-width="0.4"/><circle cx="15.5" cy="2.5" r="1.8" fill="#ff1010" stroke="#a00000" stroke-width="0.4"/></svg>
<svg style="left:439px;top:84px;" width="18" height="18" viewBox="0 0 18 18"><path d="M3 15L15 3" stroke="#7a7a7a" stroke-width="6"/><path d="M2.5 15.5L15.5 2.5" stroke="#111" stroke-width="1.2"/><circle cx="7.5" cy="8" r="1.4" fill="#111"/><circle cx="2.5" cy="15.5" r="1.8" fill="#ff1010" stroke="#a00000" stroke-width="0.4"/><circle cx="15.5" cy="2.5" r="1.8" fill="#ff1010" stroke="#a00000" stroke-width="0.4"/></svg>
<div class="r" style="left:1px;top:107px;width:256px;height:21px;background:#d9e6f3;"></div>
<div class="t" style="left:7px;top:112.14px;font-size:12px;color:#3b3b3b;font-weight:bold;">Navigator - Daten</div>
<svg style="left:220px;top:113px;" width="9" height="9" viewBox="0 0 9 9"><rect x="0.8" y="3.2" width="5" height="5" fill="none" stroke="#222" stroke-width="1.4"/><path d="M3.2 3.2V0.8h5v5H5.8" fill="none" stroke="#222" stroke-width="1.4"/></svg>
<svg style="left:241px;top:114px;" width="8" height="8" viewBox="0 0 8 8"><path d="M0.7 0.7L7.3 7.3M7.3 0.7L0.7 7.3" stroke="#222" stroke-width="1.7"/></svg>
<div class="r" style="left:2px;top:129px;width:255px;height:1021px;background:#ffffff;border:2px solid #c9c9d4;border-right-width:2px;box-sizing:border-box;"></div>
<div class="r" style="left:2px;top:1149px;width:255px;height:27px;background:#f7f7f7;border:2px solid #c9c9d4;border-top:none;box-sizing:border-box;"></div>
<div class="r" style="left:2px;top:1147px;width:40px;height:29px;background:#ffffff;border-left:2px solid #c9c9d4;border-bottom:2px solid #c9c9d4;box-sizing:border-box;"></div>
<div class="r" style="left:42px;top:1149px;width:40px;height:24px;background:#ececec;border:1px solid #c9c9d4;box-sizing:border-box;"></div>
<svg style="left:14px;top:1154px;" width="17" height="17" viewBox="0 0 17 17"><rect x="3" y="0.5" width="13" height="10" fill="#f0f0f0" stroke="#666" stroke-width="0.8"/><rect x="3" y="0" width="13" height="2.2" fill="#4070e0"/><path d="M0.5 4h4l1 1.5H10V12H0.5z" fill="#f0c020" stroke="#a08000" stroke-width="0.6"/><path d="M3.5 11q3-4 6-3t4 3l-2 3q-3-2-6 0z" fill="#90c8f0" stroke="#4080c0" stroke-width="0.5"/><circle cx="3.5" cy="11" r="1.1" fill="#e00"/><circle cx="13" cy="11" r="1.1" fill="#e00"/><circle cx="8.5" cy="14.5" r="1.1" fill="#e00"/></svg>
<svg style="left:55px;top:1156px;" width="14" height="10" viewBox="0 0 14 10"><ellipse cx="7" cy="5" rx="6.3" ry="4.2" fill="#fff" stroke="#1c2a60" stroke-width="1.2"/><circle cx="7" cy="5" r="3" fill="#3a6ad0"/><circle cx="7" cy="5" r="1.2" fill="#000"/></svg>
<svg style="left:7px;top:134px;" width="16" height="12" viewBox="0 0 16 12"><rect width="16" height="12" fill="#283878"/><rect x="4" y="0" width="1.3" height="12" fill="#fff"/><rect x="0" y="7" width="16" height="1.3" fill="#fff"/><path d="M6 1.5l9 4M1 5l3-3" stroke="#c0c8e0" stroke-width="0.7"/></svg>
<div class="t" style="left:28px;top:134.57px;font-size:11.5px;color:#000;font-weight:normal;transform:scaleX(0.867);transform-origin:0 0;">RSECTION</div>
<svg style="left:10px;top:154px;" width="9" height="6" viewBox="0 0 9 6"><path d="M0.7 0.7L4.5 4.5 8.3 0.7" fill="none" stroke="#222" stroke-width="1.3"/></svg>
<svg style="left:30px;top:150px;" width="13" height="16" viewBox="0 0 13 16"><path d="M1.5 0.5h8l3 3v12h-11z" fill="#fff" stroke="#444" stroke-width="0.9"/><path d="M3 8l7-6 2 2v3l-7 7H3z" fill="#8a8af0"/><path d="M1.5 9h5v1.5H4.8V16H3.2v-5.5H1.5z" fill="#0000a0"/></svg>
<div class="t" style="left:48px;top:152.57px;font-size:11.5px;color:#000;font-weight:bold;transform:scaleX(0.896);transform-origin:0 0;">RSECTION_Concrete Design7.rsc</div>
<svg style="left:29px;top:172px;" width="9" height="6" viewBox="0 0 9 6"><path d="M0.7 0.7L4.5 4.5 8.3 0.7" fill="none" stroke="#222" stroke-width="1.3"/></svg>
<svg style="left:47px;top:168px;" width="17" height="15" viewBox="0 0 17 15"><path d="M1 2.5a1 1 0 0 1 1-1h4.5l1.5 1.5h7a1 1 0 0 1 1 1V13a1 1 0 0 1-1 1H2a1 1 0 0 1-1-1z" fill="#f5eeb0" stroke="#c9b96a" stroke-width="0.9"/><path d="M1 5h15" stroke="#c9b96a" stroke-width="0.7"/></svg>
<div class="t" style="left:68px;top:170.57px;font-size:11.5px;color:#000;font-weight:normal;transform:scaleX(0.971);transform-origin:0 0;">Basisobjekte</div>
<svg style="left:51px;top:189px;" width="6" height="9" viewBox="0 0 6 9"><path d="M0.7 0.7L4.5 4.5 0.7 8.3" fill="none" stroke="#777" stroke-width="1.2"/></svg>
<svg style="left:68px;top:186px;" width="15" height="15" viewBox="0 0 15 15"><circle cx="4" cy="4" r="3.6" fill="#98a8e8"/><circle cx="11" cy="4" r="3.6" fill="#e8e050"/><circle cx="4" cy="11" r="3.6" fill="#60d040"/><circle cx="11" cy="11" r="3.6" fill="#e85050"/><circle cx="7.5" cy="7.5" r="2.6" fill="#fff"/></svg>
<div class="t" style="left:88px;top:188.57px;font-size:11.5px;color:#000;font-weight:normal;transform:scaleX(1.017);transform-origin:0 0;">Materialien</div>
<svg style="left:68px;top:204px;" width="15" height="15" viewBox="0 0 15 15"><path d="M2 5l11-4h2v9l-11 4z" fill="#7890e0"/><path d="M4 6l10-4M4 13l10-4" stroke="#a8c0f0" stroke-width="1.2"/><path d="M1.5 5.5h6M1.5 13h6M4.5 5.5V13" stroke="#e01818" stroke-width="1.9"/></svg>
<div class="t" style="left:88px;top:206.57px;font-size:11.5px;color:#000;font-weight:normal;transform:scaleX(0.997);transform-origin:0 0;">Querschnitte</div>
<svg style="left:51px;top:225px;" width="6" height="9" viewBox="0 0 6 9"><path d="M0.7 0.7L4.5 4.5 0.7 8.3" fill="none" stroke="#777" stroke-width="1.2"/></svg>
<svg style="left:68px;top:222px;" width="15" height="15" viewBox="0 0 15 15"><circle cx="7.5" cy="7.5" r="1.6" fill="#e01010"/></svg>
<div class="t" style="left:88px;top:224.57px;font-size:11.5px;color:#000;font-weight:normal;transform:scaleX(0.978);transform-origin:0 0;">Punkte</div>
<svg style="left:51px;top:243px;" width="6" height="9" viewBox="0 0 6 9"><path d="M0.7 0.7L4.5 4.5 0.7 8.3" fill="none" stroke="#777" stroke-width="1.2"/></svg>
<svg style="left:68px;top:240px;" width="15" height="15" viewBox="0 0 15 15"><path d="M1.5 13.5L13.5 1.5" stroke="#222" stroke-width="1.2"/><circle cx="1.8" cy="13.2" r="1.3" fill="#e01010"/><circle cx="13.2" cy="1.8" r="1.3" fill="#e01010"/></svg>
<div class="t" style="left:88px;top:242.57px;font-size:11.5px;color:#000;font-weight:normal;transform:scaleX(0.987);transform-origin:0 0;">Linien</div>
<svg style="left:51px;top:261px;" width="6" height="9" viewBox="0 0 6 9"><path d="M0.7 0.7L4.5 4.5 0.7 8.3" fill="none" stroke="#777" stroke-width="1.2"/></svg>
<svg style="left:68px;top:258px;" width="15" height="15" viewBox="0 0 15 15"><defs><linearGradient id="gteil" x1="0" y1="0" x2="1" y2="1"><stop offset="0" stop-color="#c8dcf4"/><stop offset="1" stop-color="#6890c8"/></linearGradient></defs><rect x="0.5" y="0.5" width="14" height="14" fill="url(#gteil)" stroke="#6a7a90" stroke-width="0.8"/></svg>
<div class="t" style="left:88px;top:260.57px;font-size:11.5px;color:#000;font-weight:normal;transform:scaleX(0.930);transform-origin:0 0;">Teile</div>
<svg style="left:68px;top:276px;" width="15" height="15" viewBox="0 0 15 15"><rect x="0.5" y="0.5" width="14" height="14" fill="#8cb0e0" stroke="#6a7a90" stroke-width="0.8"/><circle cx="7.5" cy="7.5" r="3.6" fill="#fff"/></svg>
<div class="t" style="left:88px;top:278.57px;font-size:11.5px;color:#000;font-weight:normal;transform:scaleX(1.069);transform-origin:0 0;">Öffnungen</div>
<svg style="left:68px;top:294px;" width="15" height="15" viewBox="0 0 15 15"><path d="M2.5 12.5L12.5 2.5" stroke="#6a6a6a" stroke-width="5"/><path d="M1.5 13.5L13.5 1.5" stroke="#111" stroke-width="1"/><circle cx="1.8" cy="13.2" r="1.3" fill="#e01010"/><circle cx="13.2" cy="1.8" r="1.3" fill="#e01010"/></svg>
<div class="t" style="left:88px;top:296.57px;font-size:11.5px;color:#000;font-weight:normal;transform:scaleX(0.947);transform-origin:0 0;">Elemente</div>
<svg style="left:51px;top:315px;" width="6" height="9" viewBox="0 0 6 9"><path d="M0.7 0.7L4.5 4.5 0.7 8.3" fill="none" stroke="#777" stroke-width="1.2"/></svg>
<svg style="left:68px;top:312px;" width="15" height="15" viewBox="0 0 15 15"><circle cx="7.5" cy="7.5" r="1.5" fill="#20c020"/></svg>
<div class="t" style="left:88px;top:314.57px;font-size:11.5px;color:#000;font-weight:normal;transform:scaleX(1.025);transform-origin:0 0;">Spannungspunkte</div>
<svg style="left:51px;top:333px;" width="6" height="9" viewBox="0 0 6 9"><path d="M0.7 0.7L4.5 4.5 0.7 8.3" fill="none" stroke="#777" stroke-width="1.2"/></svg>
<svg style="left:68px;top:330px;" width="15" height="15" viewBox="0 0 15 15"><rect x="0.5" y="0.5" width="14" height="14" fill="#a0a0a0" stroke="#666" stroke-width="0.8"/><rect x="3" y="3" width="9" height="9" fill="none" stroke="#f0b020" stroke-width="1.4"/></svg>
<div class="t" style="left:88px;top:332.57px;font-size:11.5px;color:#000;font-weight:normal;transform:scaleX(0.952);transform-origin:0 0;">Bügel</div>
<svg style="left:51px;top:351px;" width="6" height="9" viewBox="0 0 6 9"><path d="M0.7 0.7L4.5 4.5 0.7 8.3" fill="none" stroke="#777" stroke-width="1.2"/></svg>
<svg style="left:68px;top:348px;" width="15" height="15" viewBox="0 0 15 15"><circle cx="7" cy="7.5" r="4.7" fill="#e03040"/></svg>
<div class="t" style="left:88px;top:350.57px;font-size:11.5px;color:#000;font-weight:normal;transform:scaleX(0.932);transform-origin:0 0;">Stäbe</div>
<svg style="left:29px;top:370px;" width="9" height="6" viewBox="0 0 9 6"><path d="M0.7 0.7L4.5 4.5 8.3 0.7" fill="none" stroke="#222" stroke-width="1.3"/></svg>
<svg style="left:47px;top:366px;" width="17" height="15" viewBox="0 0 17 15"><path d="M1 2.5a1 1 0 0 1 1-1h4.5l1.5 1.5h7a1 1 0 0 1 1 1V13a1 1 0 0 1-1 1H2a1 1 0 0 1-1-1z" fill="#f5eeb0" stroke="#c9b96a" stroke-width="0.9"/><path d="M1 5h15" stroke="#c9b96a" stroke-width="0.7"/></svg>
<div class="t" style="left:68px;top:368.57px;font-size:11.5px;color:#000;font-weight:normal;transform:scaleX(0.990);transform-origin:0 0;">Spezielle Objekte</div>
<svg style="left:68px;top:384px;" width="16" height="15" viewBox="0 0 16 15"><path d="M1 8l2-3h9l-2 3z" fill="#8aa0d0"/><path d="M4 2l2-1.5h9L13 2z" fill="#8aa0d0"/><path d="M13 2l2-1.5v10L13 12z" fill="#2a3a60"/><rect x="4" y="2" width="9" height="6" fill="#5a78b8" stroke="#2a3a60" stroke-width="0.6"/><path d="M10 8l2-1v7l-2 1z" fill="#2a3a60"/><rect x="1" y="8" width="9" height="6.5" fill="#5a78b8" stroke="#2a3a60" stroke-width="0.6"/><rect x="6.5" y="4" width="1.6" height="1.2" fill="#111"/><rect x="4" y="10.5" width="1.6" height="1.2" fill="#111"/></svg>
<div class="t" style="left:88px;top:386.57px;font-size:11.5px;color:#000;font-weight:normal;transform:scaleX(0.939);transform-origin:0 0;">Blöcke</div>
<svg style="left:29px;top:406px;" width="9" height="6" viewBox="0 0 9 6"><path d="M0.7 0.7L4.5 4.5 8.3 0.7" fill="none" stroke="#222" stroke-width="1.3"/></svg>
<svg style="left:47px;top:402px;" width="17" height="15" viewBox="0 0 17 15"><path d="M1 2.5a1 1 0 0 1 1-1h4.5l1.5 1.5h7a1 1 0 0 1 1 1V13a1 1 0 0 1-1 1H2a1 1 0 0 1-1-1z" fill="#f5eeb0" stroke="#c9b96a" stroke-width="0.9"/><path d="M1 5h15" stroke="#c9b96a" stroke-width="0.7"/></svg>
<div class="t" style="left:68px;top:404.57px;font-size:11.5px;color:#000;font-weight:normal;transform:scaleX(1.015);transform-origin:0 0;">Lastfälle und Kombinationen</div>
<svg style="left:68px;top:420px;" width="16" height="15" viewBox="0 0 16 15"><path d="M4 1v8" stroke="#5a88d0" stroke-width="1.3"/><path d="M1.8 7l2.2 3.5L6.2 7z" fill="#5a88d0"/><path d="M0 13.5h16" stroke="#333" stroke-width="1.2"/></svg>
<div class="t" style="left:88px;top:422.57px;font-size:11.5px;color:#000;font-weight:normal;transform:scaleX(0.967);transform-origin:0 0;">Lastfälle</div>
<svg style="left:68px;top:438px;" width="16" height="15" viewBox="0 0 16 15"><rect x="0.5" y="0.5" width="5" height="3" fill="#fff" stroke="#444" stroke-width="0.8"/><rect x="0.5" y="11" width="5" height="3" fill="#fff" stroke="#444" stroke-width="0.8"/><path d="M6 2h4l2 3M6 12.5h4l2-3" fill="none" stroke="#444" stroke-width="0.8"/><rect x="12" y="6" width="4" height="3" fill="#20b040"/></svg>
<div class="t" style="left:88px;top:440.57px;font-size:11.5px;color:#000;font-weight:normal;transform:scaleX(1.018);transform-origin:0 0;">Lastkombinationen</div>
<svg style="left:47px;top:456px;" width="17" height="15" viewBox="0 0 17 15"><path d="M1 2.5a1 1 0 0 1 1-1h4.5l1.5 1.5h7a1 1 0 0 1 1 1V13a1 1 0 0 1-1 1H2a1 1 0 0 1-1-1z" fill="#f5eeb0" stroke="#c9b96a" stroke-width="0.9"/><path d="M1 5h15" stroke="#c9b96a" stroke-width="0.7"/></svg>
<div class="t" style="left:68px;top:458.57px;font-size:11.5px;color:#000;font-weight:normal;transform:scaleX(1.011);transform-origin:0 0;">Schnittgrößen</div>
<svg style="left:47px;top:474px;" width="17" height="15" viewBox="0 0 17 15"><path d="M1 2.5a1 1 0 0 1 1-1h4.5l1.5 1.5h7a1 1 0 0 1 1 1V13a1 1 0 0 1-1 1H2a1 1 0 0 1-1-1z" fill="#f5eeb0" stroke="#c9b96a" stroke-width="0.9"/><path d="M1 5h15" stroke="#c9b96a" stroke-width="0.7"/></svg>
<div class="t" style="left:68px;top:476.57px;font-size:11.5px;color:#000;font-weight:normal;transform:scaleX(0.965);transform-origin:0 0;">Ergebnisse</div>
<svg style="left:29px;top:496px;" width="9" height="6" viewBox="0 0 9 6"><path d="M0.7 0.7L4.5 4.5 8.3 0.7" fill="none" stroke="#222" stroke-width="1.3"/></svg>
<svg style="left:47px;top:492px;" width="17" height="15" viewBox="0 0 17 15"><path d="M1 2.5a1 1 0 0 1 1-1h4.5l1.5 1.5h7a1 1 0 0 1 1 1V13a1 1 0 0 1-1 1H2a1 1 0 0 1-1-1z" fill="#f5eeb0" stroke="#c9b96a" stroke-width="0.9"/><path d="M1 5h15" stroke="#c9b96a" stroke-width="0.7"/></svg>
<div class="t" style="left:68px;top:494.57px;font-size:11.5px;color:#000;font-weight:normal;transform:scaleX(1.016);transform-origin:0 0;">Spannungen</div>
<svg style="left:51px;top:513px;" width="6" height="9" viewBox="0 0 6 9"><path d="M0.7 0.7L4.5 4.5 0.7 8.3" fill="none" stroke="#777" stroke-width="1.2"/></svg>
<svg style="left:68px;top:510px;" width="16" height="16" viewBox="0 0 16 16"><rect x="0" y="0" width="2" height="16" fill="url(#grain)"/><defs><linearGradient id="grain" x1="0" y1="0" x2="0" y2="1"><stop offset="0" stop-color="#e00"/><stop offset="0.3" stop-color="#ee0"/><stop offset="0.6" stop-color="#0c0"/><stop offset="1" stop-color="#00e"/></linearGradient></defs><path d="M3 1h8M3 15h8M7 1v14" stroke="#1a2a90" stroke-width="1.8"/><circle cx="12" cy="12" r="3" fill="#6a90e8"/><circle cx="12" cy="12" r="1.2" fill="#fff"/></svg>
<div class="t" style="left:88px;top:512.57px;font-size:11.5px;color:#000;font-weight:normal;transform:scaleX(1.054);transform-origin:0 0;">Spannungskonfiguration</div>
<svg style="left:29px;top:532px;" width="9" height="6" viewBox="0 0 9 6"><path d="M0.7 0.7L4.5 4.5 8.3 0.7" fill="none" stroke="#222" stroke-width="1.3"/></svg>
<svg style="left:47px;top:528px;" width="17" height="15" viewBox="0 0 17 15"><path d="M1 2.5a1 1 0 0 1 1-1h4.5l1.5 1.5h7a1 1 0 0 1 1 1V13a1 1 0 0 1-1 1H2a1 1 0 0 1-1-1z" fill="#f5eeb0" stroke="#c9b96a" stroke-width="0.9"/><path d="M1 5h15" stroke="#c9b96a" stroke-width="0.7"/></svg>
<div class="t" style="left:68px;top:530.57px;font-size:11.5px;color:#000;font-weight:normal;transform:scaleX(1.036);transform-origin:0 0;">Hilfsobjekte</div>
<svg style="left:51px;top:549px;" width="6" height="9" viewBox="0 0 6 9"><path d="M0.7 0.7L4.5 4.5 0.7 8.3" fill="none" stroke="#777" stroke-width="1.2"/></svg>
<svg style="left:68px;top:546px;" width="14" height="14" viewBox="0 0 14 14"><path d="M2 12V7a5 5 0 0 1 10 0v5" fill="none" stroke="#9098b0" stroke-width="3.2"/><rect x="0.4" y="10" width="3.2" height="3" fill="#e03010"/><rect x="10.4" y="10" width="3.2" height="3" fill="#1040c0"/></svg>
<div class="t" style="left:88px;top:548.57px;font-size:11.5px;color:#000;font-weight:normal;transform:scaleX(1.034);transform-origin:0 0;">Objektfänge</div>
<svg style="left:68px;top:564px;" width="16" height="15" viewBox="0 0 16 15"><path d="M0.5 8v6M15.5 8v6M0.5 10.5h15" stroke="#111" stroke-width="1.1"/><path d="M1 10.5l2.5-1.3v2.6zM15 10.5l-2.5-1.3v2.6z" fill="#111"/><text x="8" y="6.5" font-size="7" font-weight="bold" text-anchor="middle" fill="#111" font-family="Liberation Sans">x</text></svg>
<div class="t" style="left:88px;top:566.57px;font-size:11.5px;color:#000;font-weight:normal;transform:scaleX(0.960);transform-origin:0 0;">Bemaßungen</div>
<svg style="left:68px;top:582px;" width="16" height="16" viewBox="0 0 16 16"><rect x="3.5" y="3" width="12" height="9" fill="#c8c8c8" stroke="#999" stroke-width="0.7"/><path d="M0.5 5.5h11l3 3v7h-14z" fill="#fff" stroke="#444" stroke-width="0.9"/><path d="M4 9V2.5a1.5 1.5 0 0 1 3 0V9a1.5 1.5 0 0 1-3 0" fill="none" stroke="#444" stroke-width="0.9"/></svg>
<div class="t" style="left:88px;top:584.57px;font-size:11.5px;color:#000;font-weight:normal;transform:scaleX(1.063);transform-origin:0 0;">Hintergrundfolien</div>
<svg style="left:47px;top:600px;" width="17" height="15" viewBox="0 0 17 15"><path d="M1 2.5a1 1 0 0 1 1-1h4.5l1.5 1.5h7a1 1 0 0 1 1 1V13a1 1 0 0 1-1 1H2a1 1 0 0 1-1-1z" fill="#f5eeb0" stroke="#c9b96a" stroke-width="0.9"/><path d="M1 5h15" stroke="#c9b96a" stroke-width="0.7"/></svg>
<div class="t" style="left:68px;top:602.57px;font-size:11.5px;color:#000;font-weight:normal;transform:scaleX(1.037);transform-origin:0 0;">Ausdruckprotokolle</div>
<div class="r" style="left:261px;top:107px;width:1338px;height:861px;background:#fcfcfc;overflow:hidden;">
<svg style="left:-261px;top:-107px;" width="1600" height="1200" viewBox="0 0 1600 1200"><defs><pattern id="gdots" x="279" y="129" width="25" height="25" patternUnits="userSpaceOnUse"><rect x="0" y="0" width="1" height="1" fill="#666666"/></pattern></defs><rect x="429" y="107" width="1" height="861" fill="#f3f3f3"/><rect x="679" y="107" width="1" height="861" fill="#f3f3f3"/><rect x="1179" y="107" width="1" height="861" fill="#f3f3f3"/><rect x="1430" y="107" width="1" height="861" fill="#f3f3f3"/><rect x="261" y="204" width="1338" height="1" fill="#f2f2f2"/><rect x="261" y="704" width="1338" height="1" fill="#f2f2f2"/><rect x="261" y="954" width="1338" height="1" fill="#f2f2f2"/><rect x="929" y="107" width="1" height="861" fill="#c4f8f8"/><rect x="261" y="454" width="1338" height="1" fill="#c4f8f8"/><polygon points="304,404 1555,404 1555,479 1255,479 1255,705 1155,705 1155,479 705,479 705,705 604,705 604,479 304,479" fill="#8c8c8c"/><rect x="261" y="107" width="1338" height="861" fill="url(#gdots)"/><polygon points="304,404 1555,404 1555,479 1255,479 1255,705 1155,705 1155,479 705,479 705,705 604,705 604,479 304,479" fill="none" stroke="#5e5e5e" stroke-width="2"/><rect x="314" y="414" width="1231" height="56" fill="none" stroke="#e0882c" stroke-width="2"/><rect x="614" y="414" width="80" height="281" fill="none" stroke="#e0882c" stroke-width="2"/><rect x="1164" y="414" width="81" height="281" fill="none" stroke="#e0882c" stroke-width="2"/><line x1="313" y1="413" x2="1546" y2="413" stroke="#2ee070" stroke-width="2" stroke-dasharray="8 8" stroke-dashoffset="7"/><line x1="313" y1="413" x2="313" y2="471" stroke="#2ee070" stroke-width="2" stroke-dasharray="8 8" stroke-dashoffset="0"/><line x1="1546" y1="413" x2="1546" y2="471" stroke="#2ee070" stroke-width="2" stroke-dasharray="8 8" stroke-dashoffset="0"/><line x1="313" y1="471" x2="613" y2="471" stroke="#2ee070" stroke-width="2" stroke-dasharray="8 8" stroke-dashoffset="0"/><line x1="695" y1="471" x2="1163" y2="471" stroke="#2ee070" stroke-width="2" stroke-dasharray="8 8" stroke-dashoffset="0"/><line x1="1246" y1="471" x2="1546" y2="471" stroke="#2ee070" stroke-width="2" stroke-dasharray="8 8" stroke-dashoffset="0"/><line x1="613" y1="471" x2="613" y2="696" stroke="#2ee070" stroke-width="2" stroke-dasharray="8 8" stroke-dashoffset="0"/><line x1="695" y1="471" x2="695" y2="696" stroke="#2ee070" stroke-width="2" stroke-dasharray="8 8" stroke-dashoffset="0"/><line x1="613" y1="696" x2="695" y2="696" stroke="#2ee070" stroke-width="2" stroke-dasharray="8 8" stroke-dashoffset="0"/><line x1="1163" y1="471" x2="1163" y2="696" stroke="#2ee070" stroke-width="2" stroke-dasharray="8 8" stroke-dashoffset="0"/><line x1="1246" y1="471" x2="1246" y2="696" stroke="#2ee070" stroke-width="2" stroke-dasharray="8 8" stroke-dashoffset="0"/><line x1="1163" y1="696" x2="1246" y2="696" stroke="#2ee070" stroke-width="2" stroke-dasharray="8 8" stroke-dashoffset="0"/><path d="M315 422V420A5 5 0 0 1 320 415H322" fill="none" stroke="#3ce0d8" stroke-width="3.2"/><path d="M1544 422V420A5 5 0 0 0 1539 415H1537" fill="none" stroke="#3ce0d8" stroke-width="3.2"/><path d="M315 462V464A5 5 0 0 0 320 469H322" fill="none" stroke="#3ce0d8" stroke-width="3.2"/><path d="M1544 462V464A5 5 0 0 1 1539 469H1537" fill="none" stroke="#3ce0d8" stroke-width="3.2"/><path d="M615 422V420A5 5 0 0 1 620 415H622" fill="none" stroke="#3ce0d8" stroke-width="3.2"/><path d="M693 422V420A5 5 0 0 0 688 415H686" fill="none" stroke="#3ce0d8" stroke-width="3.2"/><path d="M615 687V689A5 5 0 0 0 620 694H622" fill="none" stroke="#3ce0d8" stroke-width="3.2"/><path d="M693 687V689A5 5 0 0 1 688 694H686" fill="none" stroke="#3ce0d8" stroke-width="3.2"/><path d="M1165 422V420A5 5 0 0 1 1170 415H1172" fill="none" stroke="#3ce0d8" stroke-width="3.2"/><path d="M1244 422V420A5 5 0 0 0 1239 415H1237" fill="none" stroke="#3ce0d8" stroke-width="3.2"/><path d="M1165 687V689A5 5 0 0 0 1170 694H1172" fill="none" stroke="#3ce0d8" stroke-width="3.2"/><path d="M1244 687V689A5 5 0 0 1 1239 694H1237" fill="none" stroke="#3ce0d8" stroke-width="3.2"/><path d="M319.4 416.4l3.2 3.2M322.6 416.4l-3.2 3.2" stroke="#d82a3a" stroke-width="1.3"/><path d="M318.4 465.4l3.2 3.2M321.6 465.4l-3.2 3.2" stroke="#d82a3a" stroke-width="1.3"/><path d="M357.4 416.4l3.2 3.2M360.6 416.4l-3.2 3.2" stroke="#d82a3a" stroke-width="1.3"/><path d="M356.4 465.4l3.2 3.2M359.6 465.4l-3.2 3.2" stroke="#d82a3a" stroke-width="1.3"/><path d="M395.4 416.4l3.2 3.2M398.6 416.4l-3.2 3.2" stroke="#d82a3a" stroke-width="1.3"/><path d="M394.4 465.4l3.2 3.2M397.6 465.4l-3.2 3.2" stroke="#d82a3a" stroke-width="1.3"/><path d="M433.4 416.4l3.2 3.2M436.6 416.4l-3.2 3.2" stroke="#d82a3a" stroke-width="1.3"/><path d="M432.4 465.4l3.2 3.2M435.6 465.4l-3.2 3.2" stroke="#d82a3a" stroke-width="1.3"/><path d="M471.4 416.4l3.2 3.2M474.6 416.4l-3.2 3.2" stroke="#d82a3a" stroke-width="1.3"/><path d="M470.4 465.4l3.2 3.2M473.6 465.4l-3.2 3.2" stroke="#d82a3a" stroke-width="1.3"/><path d="M509.4 416.4l3.2 3.2M512.6 416.4l-3.2 3.2" stroke="#d82a3a" stroke-width="1.3"/><path d="M508.4 465.4l3.2 3.2M511.6 465.4l-3.2 3.2" stroke="#d82a3a" stroke-width="1.3"/><path d="M547.4 416.4l3.2 3.2M550.6 416.4l-3.2 3.2" stroke="#d82a3a" stroke-width="1.3"/><path d="M546.4 465.4l3.2 3.2M549.6 465.4l-3.2 3.2" stroke="#d82a3a" stroke-width="1.3"/><path d="M585.4 416.4l3.2 3.2M588.6 416.4l-3.2 3.2" stroke="#d82a3a" stroke-width="1.3"/><path d="M584.4 465.4l3.2 3.2M587.6 465.4l-3.2 3.2" stroke="#d82a3a" stroke-width="1.3"/><path d="M623.4 416.4l3.2 3.2M626.6 416.4l-3.2 3.2" stroke="#d82a3a" stroke-width="1.3"/><path d="M622.4 465.4l3.2 3.2M625.6 465.4l-3.2 3.2" stroke="#d82a3a" stroke-width="1.3"/><path d="M661.4 416.4l3.2 3.2M664.6 416.4l-3.2 3.2" stroke="#d82a3a" stroke-width="1.3"/><path d="M660.4 465.4l3.2 3.2M663.6 465.4l-3.2 3.2" stroke="#d82a3a" stroke-width="1.3"/><path d="M699.4 416.4l3.2 3.2M702.6 416.4l-3.2 3.2" stroke="#d82a3a" stroke-width="1.3"/><path d="M698.4 465.4l3.2 3.2M701.6 465.4l-3.2 3.2" stroke="#d82a3a" stroke-width="1.3"/><path d="M737.4 416.4l3.2 3.2M740.6 416.4l-3.2 3.2" stroke="#d82a3a" stroke-width="1.3"/><path d="M736.4 465.4l3.2 3.2M739.6 465.4l-3.2 3.2" stroke="#d82a3a" stroke-width="1.3"/><path d="M775.4 416.4l3.2 3.2M778.6 416.4l-3.2 3.2" stroke="#d82a3a" stroke-width="1.3"/><path d="M774.4 465.4l3.2 3.2M777.6 465.4l-3.2 3.2" stroke="#d82a3a" stroke-width="1.3"/><path d="M813.4 416.4l3.2 3.2M816.6 416.4l-3.2 3.2" stroke="#d82a3a" stroke-width="1.3"/><path d="M812.4 465.4l3.2 3.2M815.6 465.4l-3.2 3.2" stroke="#d82a3a" stroke-width="1.3"/><path d="M851.4 416.4l3.2 3.2M854.6 416.4l-3.2 3.2" stroke="#d82a3a" stroke-width="1.3"/><path d="M850.4 465.4l3.2 3.2M853.6 465.4l-3.2 3.2" stroke="#d82a3a" stroke-width="1.3"/><path d="M889.4 416.4l3.2 3.2M892.6 416.4l-3.2 3.2" stroke="#d82a3a" stroke-width="1.3"/><path d="M888.4 465.4l3.2 3.2M891.6 465.4l-3.2 3.2" stroke="#d82a3a" stroke-width="1.3"/><path d="M927.4 416.4l3.2 3.2M930.6 416.4l-3.2 3.2" stroke="#d82a3a" stroke-width="1.3"/><path d="M926.4 465.4l3.2 3.2M929.6 465.4l-3.2 3.2" stroke="#d82a3a" stroke-width="1.3"/><path d="M965.4 416.4l3.2 3.2M968.6 416.4l-3.2 3.2" stroke="#d82a3a" stroke-width="1.3"/><path d="M964.4 465.4l3.2 3.2M967.6 465.4l-3.2 3.2" stroke="#d82a3a" stroke-width="1.3"/><path d="M1003.4 416.4l3.2 3.2M1006.6 416.4l-3.2 3.2" stroke="#d82a3a" stroke-width="1.3"/><path d="M1002.4 465.4l3.2 3.2M1005.6 465.4l-3.2 3.2" stroke="#d82a3a" stroke-width="1.3"/><path d="M1041.4 416.4l3.2 3.2M1044.6 416.4l-3.2 3.2" stroke="#d82a3a" stroke-width="1.3"/><path d="M1040.4 465.4l3.2 3.2M1043.6 465.4l-3.2 3.2" stroke="#d82a3a" stroke-width="1.3"/><path d="M1079.4 416.4l3.2 3.2M1082.6 416.4l-3.2 3.2" stroke="#d82a3a" stroke-width="1.3"/><path d="M1078.4 465.4l3.2 3.2M1081.6 465.4l-3.2 3.2" stroke="#d82a3a" stroke-width="1.3"/><path d="M1117.4 416.4l3.2 3.2M1120.6 416.4l-3.2 3.2" stroke="#d82a3a" stroke-width="1.3"/><path d="M1116.4 465.4l3.2 3.2M1119.6 465.4l-3.2 3.2" stroke="#d82a3a" stroke-width="1.3"/><path d="M1155.4 416.4l3.2 3.2M1158.6 416.4l-3.2 3.2" stroke="#d82a3a" stroke-width="1.3"/><path d="M1154.4 465.4l3.2 3.2M1157.6 465.4l-3.2 3.2" stroke="#d82a3a" stroke-width="1.3"/><path d="M1193.4 416.4l3.2 3.2M1196.6 416.4l-3.2 3.2" stroke="#d82a3a" stroke-width="1.3"/><path d="M1192.4 465.4l3.2 3.2M1195.6 465.4l-3.2 3.2" stroke="#d82a3a" stroke-width="1.3"/><path d="M1231.4 416.4l3.2 3.2M1234.6 416.4l-3.2 3.2" stroke="#d82a3a" stroke-width="1.3"/><path d="M1230.4 465.4l3.2 3.2M1233.6 465.4l-3.2 3.2" stroke="#d82a3a" stroke-width="1.3"/><path d="M1269.4 416.4l3.2 3.2M1272.6 416.4l-3.2 3.2" stroke="#d82a3a" stroke-width="1.3"/><path d="M1268.4 465.4l3.2 3.2M1271.6 465.4l-3.2 3.2" stroke="#d82a3a" stroke-width="1.3"/><path d="M1307.4 416.4l3.2 3.2M1310.6 416.4l-3.2 3.2" stroke="#d82a3a" stroke-width="1.3"/><path d="M1306.4 465.4l3.2 3.2M1309.6 465.4l-3.2 3.2" stroke="#d82a3a" stroke-width="1.3"/><path d="M1345.4 416.4l3.2 3.2M1348.6 416.4l-3.2 3.2" stroke="#d82a3a" stroke-width="1.3"/><path d="M1344.4 465.4l3.2 3.2M1347.6 465.4l-3.2 3.2" stroke="#d82a3a" stroke-width="1.3"/><path d="M1383.4 416.4l3.2 3.2M1386.6 416.4l-3.2 3.2" stroke="#d82a3a" stroke-width="1.3"/><path d="M1382.4 465.4l3.2 3.2M1385.6 465.4l-3.2 3.2" stroke="#d82a3a" stroke-width="1.3"/><path d="M1421.4 416.4l3.2 3.2M1424.6 416.4l-3.2 3.2" stroke="#d82a3a" stroke-width="1.3"/><path d="M1420.4 465.4l3.2 3.2M1423.6 465.4l-3.2 3.2" stroke="#d82a3a" stroke-width="1.3"/><path d="M1459.4 416.4l3.2 3.2M1462.6 416.4l-3.2 3.2" stroke="#d82a3a" stroke-width="1.3"/><path d="M1458.4 465.4l3.2 3.2M1461.6 465.4l-3.2 3.2" stroke="#d82a3a" stroke-width="1.3"/><path d="M1497.4 416.4l3.2 3.2M1500.6 416.4l-3.2 3.2" stroke="#d82a3a" stroke-width="1.3"/><path d="M1496.4 465.4l3.2 3.2M1499.6 465.4l-3.2 3.2" stroke="#d82a3a" stroke-width="1.3"/><path d="M1535.4 416.4l3.2 3.2M1538.6 416.4l-3.2 3.2" stroke="#d82a3a" stroke-width="1.3"/><path d="M1534.4 465.4l3.2 3.2M1537.6 465.4l-3.2 3.2" stroke="#d82a3a" stroke-width="1.3"/><path d="M615.4 427.9l3.2 3.2M618.6 427.9l-3.2 3.2" stroke="#d82a3a" stroke-width="1.3"/><path d="M615.4 458.9l3.2 3.2M618.6 458.9l-3.2 3.2" stroke="#d82a3a" stroke-width="1.3"/><path d="M615.4 490.4l3.2 3.2M618.6 490.4l-3.2 3.2" stroke="#d82a3a" stroke-width="1.3"/><path d="M615.4 521.6999999999999l3.2 3.2M618.6 521.6999999999999l-3.2 3.2" stroke="#d82a3a" stroke-width="1.3"/><path d="M615.4 553.0l3.2 3.2M618.6 553.0l-3.2 3.2" stroke="#d82a3a" stroke-width="1.3"/><path d="M615.4 584.3l3.2 3.2M618.6 584.3l-3.2 3.2" stroke="#d82a3a" stroke-width="1.3"/><path d="M615.4 615.6l3.2 3.2M618.6 615.6l-3.2 3.2" stroke="#d82a3a" stroke-width="1.3"/><path d="M615.4 646.9l3.2 3.2M618.6 646.9l-3.2 3.2" stroke="#d82a3a" stroke-width="1.3"/><path d="M615.4 678.1999999999999l3.2 3.2M618.6 678.1999999999999l-3.2 3.2" stroke="#d82a3a" stroke-width="1.3"/><path d="M689.4 427.9l3.2 3.2M692.6 427.9l-3.2 3.2" stroke="#d82a3a" stroke-width="1.3"/><path d="M689.4 458.9l3.2 3.2M692.6 458.9l-3.2 3.2" stroke="#d82a3a" stroke-width="1.3"/><path d="M689.4 490.4l3.2 3.2M692.6 490.4l-3.2 3.2" stroke="#d82a3a" stroke-width="1.3"/><path d="M689.4 521.6999999999999l3.2 3.2M692.6 521.6999999999999l-3.2 3.2" stroke="#d82a3a" stroke-width="1.3"/><path d="M689.4 553.0l3.2 3.2M692.6 553.0l-3.2 3.2" stroke="#d82a3a" stroke-width="1.3"/><path d="M689.4 584.3l3.2 3.2M692.6 584.3l-3.2 3.2" stroke="#d82a3a" stroke-width="1.3"/><path d="M689.4 615.6l3.2 3.2M692.6 615.6l-3.2 3.2" stroke="#d82a3a" stroke-width="1.3"/><path d="M689.4 646.9l3.2 3.2M692.6 646.9l-3.2 3.2" stroke="#d82a3a" stroke-width="1.3"/><path d="M689.4 678.1999999999999l3.2 3.2M692.6 678.1999999999999l-3.2 3.2" stroke="#d82a3a" stroke-width="1.3"/><path d="M1165.4 427.9l3.2 3.2M1168.6 427.9l-3.2 3.2" stroke="#d82a3a" stroke-width="1.3"/><path d="M1165.4 458.9l3.2 3.2M1168.6 458.9l-3.2 3.2" stroke="#d82a3a" stroke-width="1.3"/><path d="M1165.4 490.4l3.2 3.2M1168.6 490.4l-3.2 3.2" stroke="#d82a3a" stroke-width="1.3"/><path d="M1165.4 521.6999999999999l3.2 3.2M1168.6 521.6999999999999l-3.2 3.2" stroke="#d82a3a" stroke-width="1.3"/><path d="M1165.4 553.0l3.2 3.2M1168.6 553.0l-3.2 3.2" stroke="#d82a3a" stroke-width="1.3"/><path d="M1165.4 584.3l3.2 3.2M1168.6 584.3l-3.2 3.2" stroke="#d82a3a" stroke-width="1.3"/><path d="M1165.4 615.6l3.2 3.2M1168.6 615.6l-3.2 3.2" stroke="#d82a3a" stroke-width="1.3"/><path d="M1165.4 646.9l3.2 3.2M1168.6 646.9l-3.2 3.2" stroke="#d82a3a" stroke-width="1.3"/><path d="M1165.4 678.1999999999999l3.2 3.2M1168.6 678.1999999999999l-3.2 3.2" stroke="#d82a3a" stroke-width="1.3"/><path d="M1240.4 427.9l3.2 3.2M1243.6 427.9l-3.2 3.2" stroke="#d82a3a" stroke-width="1.3"/><path d="M1240.4 458.9l3.2 3.2M1243.6 458.9l-3.2 3.2" stroke="#d82a3a" stroke-width="1.3"/><path d="M1240.4 490.4l3.2 3.2M1243.6 490.4l-3.2 3.2" stroke="#d82a3a" stroke-width="1.3"/><path d="M1240.4 521.6999999999999l3.2 3.2M1243.6 521.6999999999999l-3.2 3.2" stroke="#d82a3a" stroke-width="1.3"/><path d="M1240.4 553.0l3.2 3.2M1243.6 553.0l-3.2 3.2" stroke="#d82a3a" stroke-width="1.3"/><path d="M1240.4 584.3l3.2 3.2M1243.6 584.3l-3.2 3.2" stroke="#d82a3a" stroke-width="1.3"/><path d="M1240.4 615.6l3.2 3.2M1243.6 615.6l-3.2 3.2" stroke="#d82a3a" stroke-width="1.3"/><path d="M1240.4 646.9l3.2 3.2M1243.6 646.9l-3.2 3.2" stroke="#d82a3a" stroke-width="1.3"/><path d="M1240.4 678.1999999999999l3.2 3.2M1243.6 678.1999999999999l-3.2 3.2" stroke="#d82a3a" stroke-width="1.3"/><circle cx="619" cy="690" r="3.6" fill="#e03040"/><circle cx="642" cy="690" r="3.6" fill="#e03040"/><circle cx="666" cy="690" r="3.6" fill="#e03040"/><circle cx="690" cy="690" r="3.6" fill="#e03040"/><circle cx="1169" cy="690" r="3.6" fill="#e03040"/><circle cx="1193" cy="690" r="3.6" fill="#e03040"/><circle cx="1217" cy="690" r="3.6" fill="#e03040"/><circle cx="1241" cy="690" r="3.6" fill="#e03040"/><rect x="311" y="411" width="4" height="4" fill="#0000ff"/><rect x="1544" y="411" width="4" height="4" fill="#0000ff"/><rect x="311" y="469" width="4" height="4" fill="#0000ff"/><rect x="1544" y="469" width="4" height="4" fill="#0000ff"/><rect x="611" y="411" width="4" height="4" fill="#0000ff"/><rect x="693" y="411" width="4" height="4" fill="#0000ff"/><rect x="611" y="469" width="4" height="4" fill="#0000ff"/><rect x="693" y="469" width="4" height="4" fill="#0000ff"/><rect x="611" y="693" width="4" height="4" fill="#0000ff"/><rect x="693" y="693" width="4" height="4" fill="#0000ff"/><rect x="1161" y="411" width="4" height="4" fill="#0000ff"/><rect x="1244" y="411" width="4" height="4" fill="#0000ff"/><rect x="1161" y="469" width="4" height="4" fill="#0000ff"/><rect x="1244" y="469" width="4" height="4" fill="#0000ff"/><rect x="1161" y="693" width="4" height="4" fill="#0000ff"/><rect x="1244" y="693" width="4" height="4" fill="#0000ff"/><rect x="301" y="438.5" width="6" height="6" fill="#a8a8ff"/><rect x="1552" y="438.5" width="6" height="6" fill="#a8a8ff"/><rect x="926.5" y="401" width="6" height="6" fill="#a8a8ff"/><rect x="451" y="476" width="6" height="6" fill="#a8a8ff"/><rect x="926.5" y="476" width="6" height="6" fill="#a8a8ff"/><rect x="1402" y="476" width="6" height="6" fill="#a8a8ff"/><rect x="601" y="589" width="6" height="6" fill="#a8a8ff"/><rect x="702" y="589" width="6" height="6" fill="#a8a8ff"/><rect x="651.5" y="702" width="6" height="6" fill="#a8a8ff"/><rect x="1152" y="589" width="6" height="6" fill="#a8a8ff"/><rect x="1252" y="589" width="6" height="6" fill="#a8a8ff"/><rect x="1202" y="702" width="6" height="6" fill="#a8a8ff"/><rect x="301" y="401" width="6" height="6" fill="#ff0000"/><rect x="1552" y="401" width="6" height="6" fill="#ff0000"/><rect x="1552" y="476" width="6" height="6" fill="#ff0000"/><rect x="1252" y="476" width="6" height="6" fill="#ff0000"/><rect x="1252" y="702" width="6" height="6" fill="#ff0000"/><rect x="1152" y="702" width="6" height="6" fill="#ff0000"/><rect x="1152" y="476" width="6" height="6" fill="#ff0000"/><rect x="702" y="476" width="6" height="6" fill="#ff0000"/><rect x="702" y="702" width="6" height="6" fill="#ff0000"/><rect x="601" y="702" width="6" height="6" fill="#ff0000"/><rect x="601" y="476" width="6" height="6" fill="#ff0000"/><rect x="301" y="476" width="6" height="6" fill="#ff0000"/><rect x="652" y="552" width="5" height="5" fill="#40e0e0"/><rect x="654" y="554" width="1" height="1" fill="#208080"/><rect x="1203" y="552" width="5" height="5" fill="#40e0e0"/><rect x="1205" y="554" width="1" height="1" fill="#208080"/><rect x="927" y="440" width="5" height="5" fill="#40e0e0"/><rect x="929" y="442" width="1" height="1" fill="#208080"/><defs><radialGradient id="ball929" cx="0.35" cy="0.35" r="0.7"><stop offset="0" stop-color="#ffff80"/><stop offset="0.6" stop-color="#e8d800"/><stop offset="1" stop-color="#8a8000"/></radialGradient></defs><rect x="932.5" y="453.25" width="30" height="2.5" fill="#ff0000"/><path d="M959.5 450.5L969.5 454.5L959.5 458.5z" fill="#ee0000"/><rect x="928.25" y="457.5" width="2.5" height="30" fill="#00e000"/><path d="M925.5 484.5L929.5 494.5L933.5 484.5z" fill="#009a00"/><circle cx="929.5" cy="454.5" r="4" fill="url(#ball929)"/><text x="976" y="459" font-size="10.5" fill="#ff0000" font-family="Liberation Sans">Y</text><text x="929.5" y="509" font-size="10.5" fill="#00c000" font-family="Liberation Sans" text-anchor="middle">Z</text><defs><radialGradient id="ball320" cx="0.35" cy="0.35" r="0.7"><stop offset="0" stop-color="#ffff80"/><stop offset="0.6" stop-color="#e8d800"/><stop offset="1" stop-color="#8a8000"/></radialGradient></defs><rect x="323" y="907.75" width="30" height="2.5" fill="#ff0000"/><path d="M350 905L360 909L350 913z" fill="#ee0000"/><rect x="318.75" y="912" width="2.5" height="30" fill="#00e000"/><path d="M316 939L320 949L324 939z" fill="#009a00"/><circle cx="320" cy="909" r="4" fill="url(#ball320)"/><text x="366.5" y="913" font-size="10.5" fill="#ff0000" font-family="Liberation Sans">Y</text><text x="320" y="963" font-size="10.5" fill="#00c000" font-family="Liberation Sans" text-anchor="middle">Z</text></svg>
</div>
<div class="r" style="left:261px;top:972px;width:1338px;height:21px;background:#d9e6f3;"></div>
<div class="t" style="left:267.4px;top:977.14px;font-size:12px;color:#3b3b3b;font-weight:bold;transform:scaleX(0.994);transform-origin:0 0;">Materialien</div>
<svg style="left:1562px;top:978px;" width="9" height="9" viewBox="0 0 9 9"><rect x="0.8" y="3.2" width="5" height="5" fill="none" stroke="#222" stroke-width="1.4"/><path d="M3.2 3.2V0.8h5v5H5.8" fill="none" stroke="#222" stroke-width="1.4"/></svg>
<svg style="left:1583px;top:979px;" width="8" height="8" viewBox="0 0 8 8"><path d="M0.7 0.7L7.3 7.3M7.3 0.7L0.7 7.3" stroke="#222" stroke-width="1.7"/></svg>
<div class="t" style="left:269.4px;top:998.57px;font-size:11.5px;color:#000;font-weight:normal;transform:scaleX(0.957);transform-origin:0 0;">Gehe zu</div>
<div class="t" style="left:327.2px;top:998.57px;font-size:11.5px;color:#000;font-weight:normal;transform:scaleX(0.980);transform-origin:0 0;">Bearbeiten</div>
<div class="t" style="left:398px;top:998.57px;font-size:11.5px;color:#000;font-weight:normal;transform:scaleX(1.008);transform-origin:0 0;">Selektion</div>
<div class="t" style="left:462px;top:998.57px;font-size:11.5px;color:#000;font-weight:normal;transform:scaleX(1.008);transform-origin:0 0;">Ansicht</div>
<div class="t" style="left:516px;top:998.57px;font-size:11.5px;color:#000;font-weight:normal;transform:scaleX(1.022);transform-origin:0 0;">Einstellungen</div>
<div class="r" style="left:261px;top:1013px;width:850px;height:1px;background:#e4e4e4;"></div>
<div class="r" style="left:263px;top:1016px;width:200px;height:21px;background:#e8e8f0;"></div>
<svg style="left:268px;top:1019px;" width="15" height="15" viewBox="0 0 15 15"><rect x="0.5" y="0.5" width="14" height="14" fill="#d8d8d8" stroke="#555"/><rect x="1" y="1" width="13" height="1.8" fill="#3050c0"/><path d="M1 5.5h13M1 8.5h13M1 11.5h13M5 3v11M9 3v11" stroke="#fff" stroke-width="0.6"/><path d="M2.5 13.5L13 4v9.5z" fill="#90e890" stroke="#40a040" stroke-width="0.8"/><path d="M7 12L11 8.5V12z" fill="#d8d8d8"/></svg>
<div class="t" style="left:287px;top:1022.27px;font-size:11.5px;color:#000;font-weight:normal;transform:scaleX(0.975);transform-origin:0 0;">Basisobjekte</div>
<svg style="left:450px;top:1024px;" width="10" height="6" viewBox="0 0 10 6"><path d="M0.5 0.5l4.5 4.5 4.5-4.5" fill="none" stroke="#555" stroke-width="1"/></svg>
<div class="r" style="left:464px;top:1016px;width:15px;height:21px;background:#d0d0d0;"></div>
<div class="r" style="left:480px;top:1016px;width:15px;height:21px;background:#e8e8f0;"></div>
<svg style="left:469px;top:1023px;" width="5" height="8" viewBox="0 0 5 8"><path d="M5 0v8L0 4z" fill="#555"/></svg>
<svg style="left:485px;top:1023px;" width="5" height="8" viewBox="0 0 5 8"><path d="M0 0v8l5-4z" fill="#111"/></svg>
<div class="r" style="left:498px;top:1019px;width:1px;height:16px;background:#c8c8c8;"></div>
<div class="r" style="left:503px;top:1013px;width:1px;height:28px;background:#e0e0e0;"></div>
<div class="r" style="left:1110px;top:1013px;width:1px;height:28px;background:#e0e0e0;"></div>
<div class="r" style="left:506px;top:1015px;width:25px;height:22px;background:#cce4f7;border:1px solid #99c9ef;box-sizing:border-box;border-radius:3px;"></div>
<div class="r" style="left:532px;top:1015px;width:25px;height:22px;background:#cce4f7;border:1px solid #99c9ef;box-sizing:border-box;border-radius:3px;"></div>
<svg style="left:511px;top:1018px;" width="16" height="17" viewBox="0 0 16 17"><rect x="0.5" y="0.5" width="8" height="5" fill="#e8e8e8" stroke="#555" stroke-width="1"/><path d="M6 4l3 3a5 5 0 0 1 2 8" fill="none" stroke="#3a70c0" stroke-width="1.3"/><path d="M5 3.5l4 0.5-1 3z" fill="#3a70c0"/></svg>
<svg style="left:537px;top:1018px;" width="16" height="17" viewBox="0 0 16 17"><rect x="6.5" y="0.5" width="8" height="5" fill="#e8e8e8" stroke="#555" stroke-width="1"/><path d="M8 5a6 6 0 0 0-4 6l1 4" fill="none" stroke="#3a70c0" stroke-width="1.3"/><path d="M2 12l3 4 3-3z" fill="#3a70c0"/></svg>
<div class="r" style="left:561px;top:1019px;width:1px;height:16px;background:#d0d0d0;"></div>
<svg style="left:568px;top:1018px;" width="18" height="18" viewBox="0 0 18 18"><rect x="0.5" y="2.5" width="17" height="13" fill="#d0d0d0" stroke="#8a8a8a"/><path d="M1 6.5h16M1 9.5h16M1 12.5h16M6 3v12M12 3v12" stroke="#f0f0f0" stroke-width="0.9"/></svg>
<svg style="left:594px;top:1016px;" width="18" height="20" viewBox="0 0 18 20"><rect x="0.5" y="8.5" width="17" height="10" fill="#f0f0f0" stroke="#8a8a8a"/><path d="M1 12h16M1 15h16M6 9v9M12 9v9" stroke="#8a8a8a" stroke-width="0.7"/><path d="M3 2l11 3" stroke="#8a8a8a" stroke-width="1"/><circle cx="3" cy="2" r="1.3" fill="#8a8a8a"/><circle cx="14" cy="5" r="1.3" fill="#8a8a8a"/></svg>
<svg style="left:620px;top:1018px;" width="18" height="18" viewBox="0 0 18 18"><rect x="0.5" y="0.5" width="17" height="17" fill="#d8d8d8" stroke="#8a8a8a"/><path d="M1 6h16M1 12h16M6 1v16M12 1v16" stroke="#eaeaea" stroke-width="0.8"/><path d="M9 4v10M4 9h10" stroke="#9a9a9a" stroke-width="3.5"/></svg>
<svg style="left:646px;top:1018px;" width="18" height="18" viewBox="0 0 18 18"><rect x="0.5" y="0.5" width="17" height="17" fill="#d8d8d8" stroke="#8a8a8a"/><path d="M1 6h16M1 12h16M6 1v16M12 1v16" stroke="#eaeaea" stroke-width="0.8"/><path d="M5 5l8 8M13 5l-8 8" stroke="#a8a8a8" stroke-width="3.5"/></svg>
<svg style="left:672px;top:1018px;" width="18" height="18" viewBox="0 0 18 18"><rect x="0.5" y="0.5" width="17" height="17" fill="#d8d8d8" stroke="#8a8a8a"/><path d="M1 6h16M1 12h16M6 1v16M12 1v16" stroke="#eaeaea" stroke-width="0.8"/><circle cx="9" cy="6" r="2.5" fill="#a8a8a8"/><circle cx="9" cy="12" r="2.5" fill="#a8a8a8"/></svg>
<div class="r" style="left:697px;top:1019px;width:1px;height:16px;background:#d0d0d0;"></div>
<svg style="left:705px;top:1018px;" width="18" height="18" viewBox="0 0 18 18"><rect x="0.5" y="0.5" width="17" height="17" fill="#d8d8d8" stroke="#707070"/><path d="M3.5 3.5l11 11M14.5 3.5l-11 11" stroke="#7a7a7a" stroke-width="3"/></svg>
<div class="r" style="left:730px;top:1019px;width:1px;height:16px;background:#d0d0d0;"></div>
<svg style="left:738px;top:1017px;" width="18" height="19" viewBox="0 0 18 19"><path d="M2 1h8M2 17h8" stroke="#bbb" stroke-width="0.8"/><rect x="0.5" y="5" width="8" height="4" fill="#a0a0a0"/><rect x="0.5" y="10" width="8" height="4" fill="#a0a0a0"/><path d="M10 9h3a3 3 0 0 1 0 6h-2" fill="none" stroke="#8a8a8a" stroke-width="1.5"/><path d="M11 12.5l-3 2.5 3 2.5z" fill="#8a8a8a"/></svg>
<svg style="left:763px;top:1017px;" width="18" height="19" viewBox="0 0 18 19"><path d="M2 1h8M2 17h8" stroke="#bbb" stroke-width="0.8"/><rect x="0.5" y="7" width="9" height="5" fill="#a0a0a0"/><path d="M10 5l7 7M17 5l-7 7" stroke="#8a8a8a" stroke-width="1.8"/></svg>
<svg style="left:790px;top:1017px;" width="18" height="19" viewBox="0 0 18 19"><path d="M2 1h8M2 17h8M2 1v16" stroke="#bbb" stroke-width="0.8"/><path d="M16 9H6M9 6l-3 3 3 3" fill="none" stroke="#8a8a8a" stroke-width="1.8"/><path d="M10 5h7M10 13h7" stroke="#bbb" stroke-width="1"/></svg>
<svg style="left:815px;top:1017px;" width="18" height="19" viewBox="0 0 18 19"><path d="M2 1h8M2 17h8M2 1v16" stroke="#bbb" stroke-width="0.8"/><path d="M5 9h10M12 6l3 3-3 3" fill="none" stroke="#8a8a8a" stroke-width="1.8"/><path d="M3 5h6M3 13h6" stroke="#bbb" stroke-width="1"/></svg>
<div class="r" style="left:841px;top:1019px;width:1px;height:16px;background:#d0d0d0;"></div>
<svg style="left:849px;top:1018px;" width="18" height="18" viewBox="0 0 18 18"><rect x="0.5" y="0.5" width="17" height="17" fill="#fff" stroke="#444" stroke-width="1.2"/><rect x="1" y="1" width="16" height="6" fill="#c8c8f0"/><path d="M1 7h16M9 1v6" stroke="#444" stroke-width="0.9"/></svg>
<div class="r" style="left:874px;top:1019px;width:1px;height:16px;background:#d0d0d0;"></div>
<svg style="left:882px;top:1016px;" width="20" height="20" viewBox="0 0 20 20"><rect x="8.5" y="0.5" width="10" height="8" fill="#fff" stroke="#333" stroke-width="1"/><rect x="9" y="1" width="9" height="2.5" fill="#3050c0"/><text x="0" y="17" font-size="10" font-style="italic" font-weight="bold" fill="#222" font-family="Liberation Serif">ab</text><path d="M13 14h5M13 17h5" stroke="#555" stroke-width="1"/></svg>
<svg style="left:908px;top:1018px;" width="18" height="18" viewBox="0 0 18 18"><text x="1" y="14" font-size="15" font-style="italic" fill="#9a9a9a" font-family="Liberation Serif">fx</text></svg>
<svg style="left:933px;top:1016px;" width="19" height="20" viewBox="0 0 19 20"><text x="1" y="16" font-size="15" font-style="italic" fill="#9a9a9a" font-family="Liberation Serif">fx</text><path d="M11 2l6 6M17 2l-6 6" stroke="#9a9a9a" stroke-width="2"/></svg>
<svg style="left:958px;top:1016px;" width="19" height="20" viewBox="0 0 19 20"><text x="1" y="17" font-size="15" font-style="italic" font-weight="bold" fill="#222" font-family="Liberation Serif">fx</text><ellipse cx="13.5" cy="4" rx="4.5" ry="2.8" fill="#fff" stroke="#223" stroke-width="1"/><circle cx="13.5" cy="4" r="1.6" fill="#2a4ab0"/></svg>
<div class="r" style="left:986px;top:1019px;width:1px;height:16px;background:#d0d0d0;"></div>
<svg style="left:992px;top:1017px;" width="19" height="19" viewBox="0 0 19 19"><rect x="4.5" y="0.5" width="14" height="17" fill="#f0f0f0" stroke="#555" stroke-width="0.9"/><path d="M9 4h8M9 7h8M9 10h8M9 13h8M12 3v12M15 3v12" stroke="#40a040" stroke-width="0.8"/><rect x="0" y="3" width="9" height="9" fill="#20a040"/><text x="1.5" y="10.5" font-size="8" font-weight="bold" fill="#fff" font-family="Liberation Sans">X</text><path d="M9 15l3 3 3-3z" fill="#40a040"/></svg>
<div class="r" style="left:1019px;top:1019px;width:1px;height:16px;background:#d0d0d0;"></div>
<svg style="left:1025px;top:1017px;" width="19" height="19" viewBox="0 0 19 19"><rect x="0.5" y="6" width="18" height="12" fill="#e8e8e8" stroke="#555"/><rect x="1" y="6.5" width="17" height="2.5" fill="#3c5cb0"/><path d="M3 12h5M10 12h5M3 15h5M10 15h5" stroke="#777" stroke-width="1.2"/><path d="M2 6c2-4 6-5 10-3l5 2-2 3c-3-1-6 0-9-1z" fill="#d8b890" stroke="#8a6a40" stroke-width="0.7"/></svg>
<div class="r" style="left:1049px;top:1013px;width:1px;height:28px;background:#e0e0e0;"></div>
<svg style="left:1053px;top:1017px;" width="22" height="20" viewBox="0 0 22 20"><rect x="1" y="0.5" width="20" height="4" fill="#70c070"/><path d="M3 1v3M7 1v3M11 1v3M15 1v3M19 1v3" stroke="#fff" stroke-width="0.6"/><text x="0" y="15" font-size="11" fill="#111" font-family="Liberation Sans">0,</text><text x="9" y="15" font-size="11" fill="#2050d0" font-family="Liberation Sans" text-decoration="underline">00</text></svg>
<div class="r" style="left:1081px;top:1019px;width:1px;height:16px;background:#d0d0d0;"></div>
<svg style="left:1087px;top:1017px;" width="19" height="19" viewBox="0 0 19 19"><path d="M9.5 1a7.5 7 0 1 1-3 13.5L2 17l1.5-4A7.5 7 0 0 1 9.5 1z" fill="#555"/><text x="9.5" y="12.5" font-size="10" font-weight="bold" text-anchor="middle" fill="#fff" font-family="Liberation Sans">?</text></svg>
<div class="r" style="left:261px;top:1041px;width:1337px;height:1px;background:#c9c9d4;"></div>
<div class="r" style="left:261px;top:1042px;width:1320px;height:9px;background:#e3e3e3;"></div>
<div class="r" style="left:261px;top:1051px;width:1320px;height:32px;background:#f0f0f0;"></div>
<div class="r" style="left:320px;top:1042px;width:1px;height:9px;background:#f4f4f4;"></div>
<div class="r" style="left:320px;top:1051px;width:1px;height:102px;background:#d8d8d8;"></div>
<div class="r" style="left:571px;top:1042px;width:1px;height:9px;background:#f4f4f4;"></div>
<div class="r" style="left:571px;top:1051px;width:1px;height:102px;background:#d8d8d8;"></div>
<div class="r" style="left:711px;top:1042px;width:1px;height:9px;background:#f4f4f4;"></div>
<div class="r" style="left:711px;top:1051px;width:1px;height:102px;background:#d8d8d8;"></div>
<div class="r" style="left:811px;top:1042px;width:1px;height:9px;background:#f4f4f4;"></div>
<div class="r" style="left:811px;top:1051px;width:1px;height:102px;background:#d8d8d8;"></div>
<div class="r" style="left:911px;top:1042px;width:1px;height:9px;background:#f4f4f4;"></div>
<div class="r" style="left:911px;top:1051px;width:1px;height:102px;background:#d8d8d8;"></div>
<div class="r" style="left:1011px;top:1042px;width:1px;height:9px;background:#f4f4f4;"></div>
<div class="r" style="left:1011px;top:1051px;width:1px;height:102px;background:#d8d8d8;"></div>
<div class="r" style="left:1111px;top:1042px;width:1px;height:9px;background:#f4f4f4;"></div>
<div class="r" style="left:1111px;top:1051px;width:1px;height:102px;background:#d8d8d8;"></div>
<div class="r" style="left:1211px;top:1042px;width:1px;height:9px;background:#f4f4f4;"></div>
<div class="r" style="left:1211px;top:1051px;width:1px;height:102px;background:#d8d8d8;"></div>
<div class="r" style="left:1311px;top:1042px;width:1px;height:9px;background:#f4f4f4;"></div>
<div class="r" style="left:1311px;top:1051px;width:1px;height:102px;background:#d8d8d8;"></div>
<div class="r" style="left:1396px;top:1042px;width:1px;height:9px;background:#f4f4f4;"></div>
<div class="r" style="left:1396px;top:1051px;width:1px;height:102px;background:#d8d8d8;"></div>
<div class="r" style="left:261px;top:1083px;width:1320px;height:1px;background:#d8d8d8;"></div>
<div class="r" style="left:320px;top:1084px;width:1261px;height:69px;background:#ffffff;"></div>
<div class="r" style="left:711px;top:1084px;width:600px;height:31px;background:#f7f7f0;"></div>
<div class="r" style="left:911px;top:1115px;width:100px;height:38px;background:#f7f7f0;"></div>
<div class="r" style="left:1396px;top:1115px;width:185px;height:38px;background:#f7f7f0;"></div>
<div class="r" style="left:571px;top:1084px;width:1px;height:69px;background:#dcdcdc;"></div>
<div class="r" style="left:711px;top:1084px;width:1px;height:69px;background:#dcdcdc;"></div>
<div class="r" style="left:811px;top:1084px;width:1px;height:69px;background:#dcdcdc;"></div>
<div class="r" style="left:911px;top:1084px;width:1px;height:69px;background:#dcdcdc;"></div>
<div class="r" style="left:1011px;top:1084px;width:1px;height:69px;background:#dcdcdc;"></div>
<div class="r" style="left:1111px;top:1084px;width:1px;height:69px;background:#dcdcdc;"></div>
<div class="r" style="left:1211px;top:1084px;width:1px;height:69px;background:#dcdcdc;"></div>
<div class="r" style="left:1311px;top:1084px;width:1px;height:69px;background:#dcdcdc;"></div>
<div class="r" style="left:1396px;top:1084px;width:1px;height:69px;background:#dcdcdc;"></div>
<div class="r" style="left:320px;top:1099px;width:1261px;height:1px;background:#dcdcdc;"></div>
<div class="r" style="left:320px;top:1115px;width:1261px;height:1px;background:#dcdcdc;"></div>
<div class="r" style="left:320px;top:1131px;width:1261px;height:1px;background:#dcdcdc;"></div>
<div class="r" style="left:320px;top:1147px;width:1261px;height:1px;background:#dcdcdc;"></div>
<div class="r" style="left:261px;top:1084px;width:59px;height:69px;background:#e2e2e2;"></div>
<div class="r" style="left:261px;top:1099px;width:59px;height:1px;background:#f2f2f2;"></div>
<div class="r" style="left:261px;top:1115px;width:59px;height:1px;background:#f2f2f2;"></div>
<div class="r" style="left:261px;top:1131px;width:59px;height:1px;background:#f2f2f2;"></div>
<div class="r" style="left:261px;top:1147px;width:59px;height:1px;background:#f2f2f2;"></div>
<div class="t" style="left:271.98px;top:1056.57px;font-size:11.5px;color:#000;font-weight:normal;transform:scaleX(0.930);transform-origin:0 0;">Material</div>
<div class="t" style="left:284.17px;top:1069.57px;font-size:11.5px;color:#000;font-weight:normal;transform:scaleX(0.930);transform-origin:0 0;">Nr.</div>
<div class="t" style="left:398.79px;top:1069.57px;font-size:11.5px;color:#000;font-weight:normal;transform:scaleX(0.933);transform-origin:0 0;">Name des Materials</div>
<div class="t" style="left:621.2px;top:1056.57px;font-size:11.5px;color:#000;font-weight:normal;transform:scaleX(0.930);transform-origin:0 0;">Material-</div>
<div class="t" style="left:634.87px;top:1069.57px;font-size:11.5px;color:#000;font-weight:normal;transform:scaleX(0.930);transform-origin:0 0;">typ</div>
<div class="t" style="left:721.66px;top:1053.57px;font-size:11.5px;color:#000;font-weight:normal;transform:scaleX(0.935);transform-origin:0 0;">Elastizitätsmodul</div>
<div class="t" style="left:736.47px;top:1069.57px;font-size:11.5px;color:#000;font-weight:normal;transform:scaleX(0.975);transform-origin:0 0;">E [N/mm<span style="font-size:8px;vertical-align:5px">2</span>]</div>
<div class="t" style="left:832.11px;top:1053.57px;font-size:11.5px;color:#000;font-weight:normal;transform:scaleX(0.935);transform-origin:0 0;">Schubmodul</div>
<div class="t" style="left:835.87px;top:1069.57px;font-size:11.5px;color:#000;font-weight:normal;transform:scaleX(0.974);transform-origin:0 0;">G [N/mm<span style="font-size:8px;vertical-align:5px">2</span>]</div>
<div class="t" style="left:928.22px;top:1053.57px;font-size:11.5px;color:#000;font-weight:normal;transform:scaleX(0.935);transform-origin:0 0;">Querdehnzahl</div>
<div class="t" style="left:951.19px;top:1069.57px;font-size:11.5px;color:#000;font-weight:normal;transform:scaleX(0.940);transform-origin:0 0;">ν [--]</div>
<div class="t" style="left:1027.34px;top:1053.57px;font-size:11.5px;color:#000;font-weight:normal;transform:scaleX(0.935);transform-origin:0 0;">Spez. Gewicht</div>
<div class="t" style="left:1039.18px;top:1069.57px;font-size:11.5px;color:#000;font-weight:normal;transform:scaleX(0.979);transform-origin:0 0;">γ [kN/m<span style="font-size:8px;vertical-align:5px">3</span>]</div>
<div class="t" style="left:1146.76px;top:1053.57px;font-size:11.5px;color:#000;font-weight:normal;transform:scaleX(0.935);transform-origin:0 0;">Dichte</div>
<div class="t" style="left:1139.7px;top:1069.57px;font-size:11.5px;color:#000;font-weight:normal;transform:scaleX(0.980);transform-origin:0 0;">ρ [kg/m<span style="font-size:8px;vertical-align:5px">3</span>]</div>
<div class="t" style="left:1222.85px;top:1053.57px;font-size:11.5px;color:#000;font-weight:normal;transform:scaleX(0.935);transform-origin:0 0;">Wärmedehnzahl</div>
<div class="t" style="left:1243.8px;top:1069.57px;font-size:11.5px;color:#000;font-weight:normal;transform:scaleX(0.940);transform-origin:0 0;">α [1/°C]</div>
<div class="t" style="left:1332.56px;top:1069.57px;font-size:11.5px;color:#000;font-weight:normal;transform:scaleX(0.940);transform-origin:0 0;">Optionen</div>
<div class="t" style="left:1461.06px;top:1069.57px;font-size:11.5px;color:#000;font-weight:normal;transform:scaleX(0.940);transform-origin:0 0;">Kommentar</div>
<div class="t" style="left:287.99px;top:1086.57px;font-size:11.5px;color:#000;font-weight:normal;transform:scaleX(0.940);transform-origin:0 0;">1</div>
<div class="t" style="left:287.99px;top:1102.57px;font-size:11.5px;color:#000;font-weight:normal;transform:scaleX(0.940);transform-origin:0 0;">2</div>
<div class="t" style="left:287.99px;top:1118.57px;font-size:11.5px;color:#000;font-weight:normal;transform:scaleX(0.940);transform-origin:0 0;">3</div>
<div class="t" style="left:287.99px;top:1134.57px;font-size:11.5px;color:#000;font-weight:normal;transform:scaleX(0.940);transform-origin:0 0;">4</div>
<div class="r" style="left:261px;top:1147px;width:60px;height:6px;overflow:hidden;"><div class="t" style="left:0;width:60px;text-align:center;top:2.8420000000000982px;font-size:12px;">5</div></div>
<div class="r" style="left:326px;top:1086px;width:11px;height:11px;background:#4da6ff;"></div>
<div class="t" style="left:342px;top:1086.57px;font-size:11.5px;color:#000;font-weight:normal;transform:scaleX(0.940);transform-origin:0 0;">C35/45</div>
<div class="r" style="left:326px;top:1102px;width:11px;height:11px;background:#8a7a68;"></div>
<div class="t" style="left:342px;top:1102.57px;font-size:11.5px;color:#000;font-weight:normal;transform:scaleX(0.900);transform-origin:0 0;">B500S(A)</div>
<div class="r" style="left:576px;top:1086px;width:11px;height:11px;background:#f0c000;"></div>
<div class="t" style="left:592px;top:1086.57px;font-size:11.5px;color:#000;font-weight:normal;transform:scaleX(0.940);transform-origin:0 0;">Beton</div>
<div class="r" style="left:576px;top:1102px;width:11px;height:11px;background:#96cccc;"></div>
<div class="t" style="left:592px;top:1102.57px;font-size:11.5px;color:#000;font-weight:normal;transform:scaleX(0.940);transform-origin:0 0;">Betonstahl</div>
<div class="r" style="left:322px;top:1084px;width:248px;height:15px;background:transparent;border:1px dotted #333;box-sizing:border-box;"></div>
<div class="t" style="left:767.01px;top:1086.57px;font-size:11.5px;color:#000;font-weight:normal;transform:scaleX(0.950);transform-origin:0 0;">34000.0</div>
<div class="t" style="left:867.01px;top:1086.57px;font-size:11.5px;color:#000;font-weight:normal;transform:scaleX(0.950);transform-origin:0 0;">14166.7</div>
<div class="t" style="left:979.16px;top:1086.57px;font-size:11.5px;color:#000;font-weight:normal;transform:scaleX(0.950);transform-origin:0 0;">0.200</div>
<div class="t" style="left:1079.16px;top:1086.57px;font-size:11.5px;color:#000;font-weight:normal;transform:scaleX(0.950);transform-origin:0 0;">25.00</div>
<div class="t" style="left:1167.01px;top:1086.57px;font-size:11.5px;color:#000;font-weight:normal;transform:scaleX(0.950);transform-origin:0 0;">2500.00</div>
<div class="t" style="left:1260.93px;top:1086.57px;font-size:11.5px;color:#000;font-weight:normal;transform:scaleX(0.950);transform-origin:0 0;">0.000010</div>
<div class="t" style="left:760.93px;top:1102.57px;font-size:11.5px;color:#000;font-weight:normal;transform:scaleX(0.950);transform-origin:0 0;">200000.0</div>
<div class="t" style="left:867.01px;top:1102.57px;font-size:11.5px;color:#000;font-weight:normal;transform:scaleX(0.950);transform-origin:0 0;">76923.1</div>
<div class="t" style="left:979.16px;top:1102.57px;font-size:11.5px;color:#000;font-weight:normal;transform:scaleX(0.950);transform-origin:0 0;">0.300</div>
<div class="t" style="left:1079.16px;top:1102.57px;font-size:11.5px;color:#000;font-weight:normal;transform:scaleX(0.950);transform-origin:0 0;">78.50</div>
<div class="t" style="left:1167.01px;top:1102.57px;font-size:11.5px;color:#000;font-weight:normal;transform:scaleX(0.950);transform-origin:0 0;">7850.00</div>
<div class="t" style="left:1260.93px;top:1102.57px;font-size:11.5px;color:#000;font-weight:normal;transform:scaleX(0.950);transform-origin:0 0;">0.000010</div>
<div class="r" style="left:1581px;top:1042px;width:16px;height:111px;background:#f0f0f0;"></div>
<div class="r" style="left:1589px;top:1059px;width:2px;height:37px;background:#8a8a8a;"></div>
<div class="r" style="left:261px;top:1153px;width:1337px;height:1px;background:#c9c9d4;"></div>
<div class="r" style="left:261px;top:1041px;width:1px;height:113px;background:#c9c9d4;"></div>
<svg style="left:266px;top:1161px;" width="8" height="8" viewBox="0 0 8 8"><rect x="0" y="0" width="2" height="8" fill="#8a8a8a"/><path d="M8 0v8L2.5 4z" fill="#8a8a8a"/></svg>
<svg style="left:284px;top:1161px;" width="6" height="8" viewBox="0 0 6 8"><path d="M6 0v8L0 4z" fill="#aaaaaa"/></svg>
<div class="t" style="left:306.9px;top:1159.07px;font-size:11.5px;color:#000;font-weight:normal;transform:scaleX(0.950);transform-origin:0 0;">1 von 10</div>
<svg style="left:366px;top:1161px;" width="6" height="8" viewBox="0 0 6 8"><path d="M0 0v8l6-4z" fill="#444"/></svg>
<svg style="left:382px;top:1161px;" width="8" height="8" viewBox="0 0 8 8"><path d="M0 0v8l5.5-4z" fill="#333"/><rect x="6" y="0" width="2" height="8" fill="#333"/></svg>
<div class="r" style="left:469px;top:1153px;width:83px;height:20px;background:#ececec;border:1px solid #c9c9d4;border-top:none;box-sizing:border-box;"></div>
<div class="t" style="left:477.7px;top:1158.57px;font-size:11.5px;color:#000;font-weight:normal;transform:scaleX(1.006);transform-origin:0 0;">Querschnitte</div>
<div class="r" style="left:551px;top:1153px;width:62px;height:20px;background:#ececec;border:1px solid #c9c9d4;border-top:none;box-sizing:border-box;"></div>
<div class="t" style="left:564.5px;top:1158.57px;font-size:11.5px;color:#000;font-weight:normal;transform:scaleX(0.978);transform-origin:0 0;">Punkte</div>
<div class="r" style="left:612px;top:1153px;width:62px;height:20px;background:#ececec;border:1px solid #c9c9d4;border-top:none;box-sizing:border-box;"></div>
<div class="t" style="left:627.75px;top:1158.57px;font-size:11.5px;color:#000;font-weight:normal;transform:scaleX(0.994);transform-origin:0 0;">Linien</div>
<div class="r" style="left:673px;top:1153px;width:62px;height:20px;background:#ececec;border:1px solid #c9c9d4;border-top:none;box-sizing:border-box;"></div>
<div class="t" style="left:693.0px;top:1158.57px;font-size:11.5px;color:#000;font-weight:normal;transform:scaleX(0.930);transform-origin:0 0;">Teile</div>
<div class="r" style="left:734px;top:1153px;width:75px;height:20px;background:#ececec;border:1px solid #c9c9d4;border-top:none;box-sizing:border-box;"></div>
<div class="t" style="left:743.0px;top:1158.57px;font-size:11.5px;color:#000;font-weight:normal;transform:scaleX(1.065);transform-origin:0 0;">Öffnungen</div>
<div class="r" style="left:808px;top:1153px;width:64px;height:20px;background:#ececec;border:1px solid #c9c9d4;border-top:none;box-sizing:border-box;"></div>
<div class="t" style="left:817.0px;top:1158.57px;font-size:11.5px;color:#000;font-weight:normal;transform:scaleX(0.947);transform-origin:0 0;">Elemente</div>
<div class="r" style="left:871px;top:1153px;width:114px;height:20px;background:#ececec;border:1px solid #c9c9d4;border-top:none;box-sizing:border-box;"></div>
<div class="t" style="left:880.5px;top:1158.57px;font-size:11.5px;color:#000;font-weight:normal;transform:scaleX(1.025);transform-origin:0 0;">Spannungspunkte</div>
<div class="r" style="left:984px;top:1153px;width:61px;height:20px;background:#ececec;border:1px solid #c9c9d4;border-top:none;box-sizing:border-box;"></div>
<div class="t" style="left:1000.5px;top:1158.57px;font-size:11.5px;color:#000;font-weight:normal;transform:scaleX(0.952);transform-origin:0 0;">Bügel</div>
<div class="r" style="left:1044px;top:1153px;width:62px;height:20px;background:#ececec;border:1px solid #c9c9d4;border-top:none;box-sizing:border-box;"></div>
<div class="t" style="left:1061.0px;top:1158.57px;font-size:11.5px;color:#000;font-weight:normal;transform:scaleX(0.932);transform-origin:0 0;">Stäbe</div>
<div class="r" style="left:394px;top:1153px;width:76px;height:23px;background:#ffffff;border:1px solid #c9c9d4;border-top:none;box-sizing:border-box;"></div>
<div class="t" style="left:403.35px;top:1159.57px;font-size:11.5px;color:#000;font-weight:normal;transform:scaleX(1.019);transform-origin:0 0;">Materialien</div>
<div class="r" style="left:918px;top:1179px;width:36px;height:18px;background:#ececec;border-top:1px solid #c8c8c8;border-left:1px solid #c8c8c8;border-right:1px solid #e0e0e0;box-sizing:border-box;"></div>
<div class="t" style="left:923.0px;top:1183.57px;font-size:11.5px;color:#000;font-weight:normal;transform:scaleX(0.862);transform-origin:0 0;">FANG</div>
<div class="r" style="left:956px;top:1179px;width:47px;height:18px;background:#ececec;border-top:1px solid #c8c8c8;border-left:1px solid #c8c8c8;border-right:1px solid #e0e0e0;box-sizing:border-box;"></div>
<div class="t" style="left:960.8px;top:1183.57px;font-size:11.5px;color:#000;font-weight:normal;transform:scaleX(0.823);transform-origin:0 0;">RASTER</div>
<div class="r" style="left:1005px;top:1179px;width:46px;height:18px;background:#ececec;border-top:1px solid #c8c8c8;border-left:1px solid #c8c8c8;border-right:1px solid #e0e0e0;box-sizing:border-box;"></div>
<div class="t" style="left:1010.5px;top:1183.57px;font-size:11.5px;color:#000;font-weight:normal;transform:scaleX(0.894);transform-origin:0 0;">OFANG</div>
<div class="r" style="left:1166px;top:1179px;width:1px;height:18px;background:#d0d0d0;"></div>
<div class="r" style="left:1272px;top:1179px;width:1px;height:18px;background:#d0d0d0;"></div>
<div class="r" style="left:1428px;top:1179px;width:1px;height:18px;background:#d0d0d0;"></div>
<div class="r" style="left:1504px;top:1179px;width:1px;height:18px;background:#d0d0d0;"></div>
<div class="r" style="left:1580px;top:1179px;width:1px;height:18px;background:#d0d0d0;"></div>
<div class="t" style="left:1277.5px;top:1183.57px;font-size:11.5px;color:#000;font-weight:normal;transform:scaleX(0.895);transform-origin:0 0;">KS: Global YZ</div>
<div class="t" style="left:1432.5px;top:1183.57px;font-size:11.5px;color:#000;font-weight:normal;transform:scaleX(0.925);transform-origin:0 0;">Y: -265.7 mm</div>
<div class="t" style="left:1509px;top:1183.57px;font-size:11.5px;color:#000;font-weight:normal;transform:scaleX(0.926);transform-origin:0 0;">Z: 801.0 mm</div>
<div class="r" style="left:1594px;top:1189px;width:2px;height:2px;background:#a8a8a8;"></div>
<div class="r" style="left:1591px;top:1192px;width:2px;height:2px;background:#a8a8a8;"></div>
<div class="r" style="left:1594px;top:1192px;width:2px;height:2px;background:#a8a8a8;"></div>
<div class="r" style="left:1588px;top:1195px;width:2px;height:2px;background:#a8a8a8;"></div>
<div class="r" style="left:1591px;top:1195px;width:2px;height:2px;background:#a8a8a8;"></div>
<div class="r" style="left:1594px;top:1195px;width:2px;height:2px;background:#a8a8a8;"></div>
<svg style="left:0px;top:0px;" width="9" height="9" viewBox="0 0 9 9"><path d="M0 0H9V0.5A8.5 8.5 0 0 0 0.5 9H0z" fill="#e4e4e4"/><path d="M9 0.5A8.5 8.5 0 0 0 0.5 9" fill="none" stroke="#a0a0a0" stroke-width="1"/></svg>
<svg style="left:1591px;top:0px;" width="9" height="9" viewBox="0 0 9 9"><path d="M9 0H0V0.5A8.5 8.5 0 0 1 8.5 9H9z" fill="#e4e4e4"/><path d="M0 0.5A8.5 8.5 0 0 1 8.5 9" fill="none" stroke="#a0a0a0" stroke-width="1"/></svg>
<svg style="left:0px;top:1191px;" width="9" height="9" viewBox="0 0 9 9"><path d="M0 9H9V8.5A8.5 8.5 0 0 1 0.5 0H0z" fill="#403848"/><path d="M9 8.5A8.5 8.5 0 0 1 0.5 0" fill="none" stroke="#909090" stroke-width="1"/></svg>
<svg style="left:1591px;top:1191px;" width="9" height="9" viewBox="0 0 9 9"><path d="M9 9H0V8.5A8.5 8.5 0 0 0 8.5 0H9z" fill="#b8c0c8"/><path d="M0 8.5A8.5 8.5 0 0 0 8.5 0" fill="none" stroke="#909090" stroke-width="1"/></svg>
</body></html>
